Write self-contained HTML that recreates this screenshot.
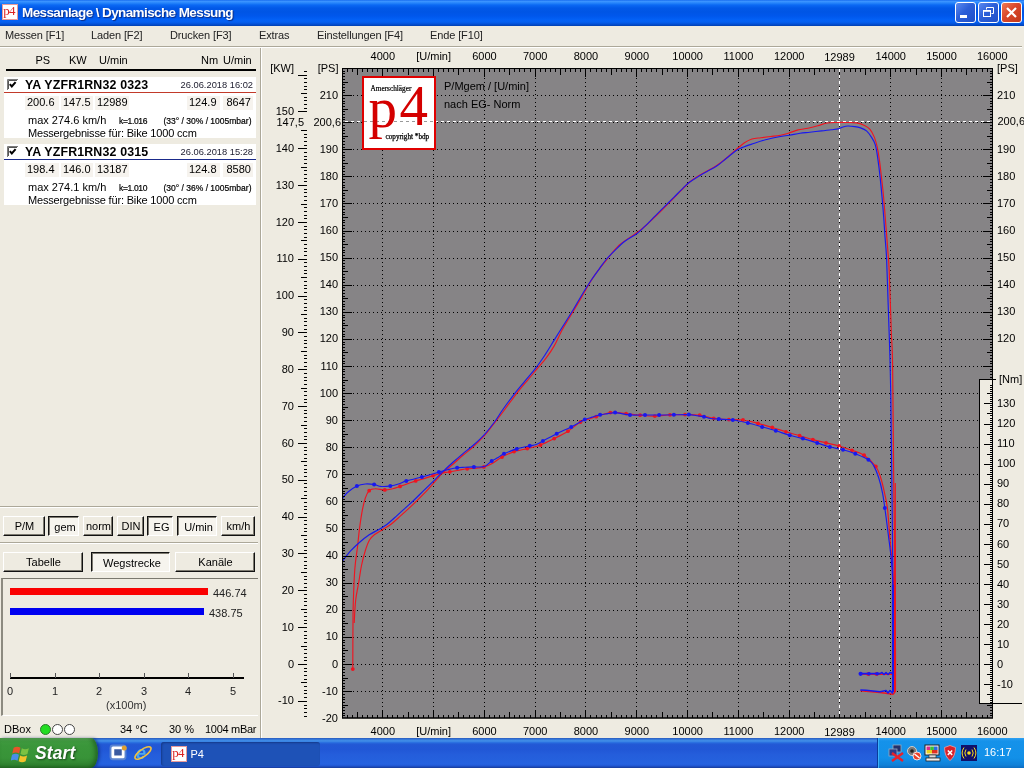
<!DOCTYPE html>
<html lang="de">
<head>
<meta charset="utf-8">
<title>Messanlage \ Dynamische Messung</title>
<style>
html,body{margin:0;padding:0;}
body{width:1024px;height:768px;overflow:hidden;position:relative;background:#EEEBE1;font-family:"Liberation Sans",Arial,sans-serif;font-size:11px;color:#000;}
.abs{position:absolute;}
.t{position:absolute;white-space:nowrap;line-height:13px;}
/* title bar */
#titlebar{position:absolute;left:0;top:0;width:1024px;height:26px;background:linear-gradient(to bottom,#1a6ef0 0px,#3a93ff 1.5px,#2685fb 3px,#0b69f4 5px,#0259e8 8px,#0055e5 12px,#0057ec 16px,#0361f6 20px,#0560f0 22px,#0351d8 24px,#0040b0 26px);}
#title{position:absolute;left:22px;top:4px;font-weight:bold;font-size:13.5px;line-height:17px;color:#fff;text-shadow:1px 1px 1px #0a2a80;white-space:nowrap;letter-spacing:-0.6px;}
.tb{position:absolute;top:2px;width:19px;height:19px;border:1px solid #fff;border-radius:3px;background:linear-gradient(135deg,#5b8af0 0%,#2c5fd8 45%,#2050c8 100%);}
#tbclose{background:linear-gradient(135deg,#ee7a55 0%,#d9472a 45%,#c2381b 100%);}
/* menu */
#menubar{position:absolute;left:0;top:26px;width:1024px;height:20px;}
#menubar span{position:absolute;top:3px;line-height:13px;white-space:nowrap;color:#222;letter-spacing:-0.12px;}
.hline{position:absolute;height:1px;background:#aca899;}
.hline2{position:absolute;height:1px;background:#fff;}
/* run blocks */
.run{position:absolute;left:4px;width:252px;height:61px;background:#fff;}
.cell{position:absolute;top:19px;height:14px;background:#f6f3ee;}
.btn{position:absolute;height:20px;box-sizing:border-box;line-height:17px;text-align:center;white-space:nowrap;}
.up{border:1px solid;border-color:#fff #111 #111 #fff;box-shadow:inset -1px -1px 0 #7d7a70;padding:1px 0 0 1px;}
.down{border:1px solid;border-color:#111 #fff #fff #111;box-shadow:inset 1px 1px 0 #7d7a70;background:#f6f4ee;padding:2px 0 0 3px;}
.circ{position:absolute;width:9px;height:9px;border:1px solid #444;border-radius:50%;background:#fff;top:724px;}
/* taskbar */
#taskbar{position:absolute;left:0;top:738px;width:1024px;height:30px;background:linear-gradient(to bottom,#2a62c8 0,#3165c4 3%,#3682e5 6%,#4490e6 10%,#3883e5 12%,#2b71e0 15%,#2663da 18%,#235bd6 20%,#2258d5 23%,#2157d6 38%,#245ddb 54%,#2562df 86%,#245fdc 89%,#2158d4 92%,#1d4ec0 95%,#1941a5 98%);}
#start{position:absolute;left:0;top:0;width:98px;height:30px;border-radius:0 7px 7px 0/0 15px 15px 0;background:linear-gradient(to bottom,#5fae5f 0px,#3f9a3f 3px,#3a963a 8px,#389338 20px,#2f822f 27px,#256f25 30px);box-shadow:inset -3px 0 4px rgba(20,70,20,0.55),2px 0 3px rgba(10,30,100,0.5);}
#starttxt{position:absolute;left:35px;top:5px;font-size:17.5px;font-weight:bold;font-style:italic;color:#fff;line-height:20px;text-shadow:1px 1px 2px #1a4a1a;letter-spacing:0.1px;}
#task{position:absolute;left:160.500px;top:3.500px;width:159px;height:24px;border-radius:3px;background:#1e52b7;box-shadow:inset 1px 1px 2px #153a8a;}
#tray{position:absolute;left:877px;top:0;width:147px;height:30px;background:linear-gradient(to bottom,#2fa0f2 0px,#1592ea 3px,#1290e8 20px,#0f80d8 27px,#0d6cc0 30px);border-left:1px solid #0a3c9a;box-shadow:inset 1px 0 0 #3db0f8;}
svg.chart{position:absolute;left:0;top:0;}
#root{position:absolute;left:0;top:0;width:1024px;height:768px;overflow:hidden;will-change:transform;}
</style>
</head>
<body>
<div id="root">
<!-- title bar -->
<div id="titlebar">
  <svg class="abs" style="left:2px;top:4px" width="16" height="16" viewBox="0 0 16 16"><rect x="0.5" y="0.5" width="15" height="15" fill="#fff" stroke="#e89a9a"/><text x="1.2" y="11" font-family="Liberation Serif,serif" font-size="13px" fill="#d22" letter-spacing="-0.8">p4</text></svg>
  <div id="title">Messanlage \ Dynamische Messung</div>
  <div class="tb" style="left:955px"><svg width="19" height="19"><rect x="4" y="12" width="7" height="3" fill="#fff"/></svg></div>
  <div class="tb" style="left:978px"><svg width="19" height="19" fill="none" stroke="#fff"><path d="M7.5 6.5v-2h7v6h-2" stroke-width="1"/><rect x="4.5" y="7.5" width="7" height="6" stroke-width="1"/><line x1="4" y1="8" x2="12" y2="8" stroke-width="1.6"/></svg></div>
  <div class="tb" id="tbclose" style="left:1001px"><svg width="19" height="19" stroke="#fff" stroke-width="2.2" stroke-linecap="butt"><path d="M5 5l9 9M14 5l-9 9"/></svg></div>
</div>
<!-- menu bar -->
<div id="menubar">
  <span style="left:5px">Messen [F1]</span>
  <span style="left:91px">Laden [F2]</span>
  <span style="left:170px">Drucken [F3]</span>
  <span style="left:259px">Extras</span>
  <span style="left:317px">Einstellungen [F4]</span>
  <span style="left:430px">Ende [F10]</span>
</div>
<div class="hline" style="left:0;top:46px;width:1022px"></div>
<div class="hline2" style="left:0;top:47px;width:1022px"></div>
<div class="abs" style="left:260px;top:48px;width:1px;height:690px;background:#aca899"></div>
<div class="abs" style="left:261px;top:48px;width:1px;height:690px;background:#fff"></div>

<!-- left panel header -->
<div class="t" style="left:35.500px;top:54px">PS</div>
<div class="t" style="left:69px;top:54px">KW</div>
<div class="t" style="left:99px;top:54px">U/min</div>
<div class="t" style="left:201px;top:54px">Nm</div>
<div class="t" style="left:223px;top:54px">U/min</div>
<div class="abs" style="left:6px;top:69px;width:250px;height:2px;background:#000"></div>

<!-- run 1 -->
<div class="run" style="top:77px">
  <svg class="abs" style="left:2.500px;top:1.500px" width="11" height="11"><rect x="0" y="0" width="11" height="11" fill="#fff"/><path d="M0.5 11V0.5H11" fill="none" stroke="#7a7a7a" stroke-width="1"/><path d="M1.5 10V1.5H10" fill="none" stroke="#555" stroke-width="1"/><path d="M2.800 5.200l2 2.300l3.800-4.300" fill="none" stroke="#000" stroke-width="2"/></svg>
  <div class="t" style="left:21px;top:1px;font-weight:bold;font-size:12.4px;line-height:14px;letter-spacing:0.15px">YA YZFR1RN32 0323</div>
  <div class="t" style="right:3px;top:2px;font-size:9.3px;line-height:12px;color:#223">26.06.2018 16:02</div>
  <div class="abs" style="left:0;top:15px;width:252px;height:1px;background:#c23a2a"></div>
  <div class="cell" style="left:21px;width:34px"></div><div class="cell" style="left:57px;width:32px"></div><div class="cell" style="left:91px;width:34px"></div><div class="cell" style="left:183px;width:33px"></div><div class="cell" style="left:219px;width:30px"></div>
  <div class="t" style="left:23px;top:19px">200.6</div>
  <div class="t" style="left:59px;top:19px">147.5</div>
  <div class="t" style="left:93px;top:19px">12989</div>
  <div class="t" style="left:185px;top:19px">124.9</div>
  <div class="t" style="left:222.500px;top:19px">8647</div>
  <div class="t" style="left:24px;top:37px">max 274.6 km/h</div>
  <div class="t" style="left:115px;top:38px;font-size:8.5px;letter-spacing:-0.35px;-webkit-text-stroke:0.2px #000">k=1.016</div>
  <div class="t" style="left:159.500px;top:38px;font-size:8.5px;-webkit-text-stroke:0.2px #000">(33° / 30% / 1005mbar)</div>
  <div class="t" style="left:24px;top:50px;letter-spacing:-0.17px">Messergebnisse für: Bike 1000 ccm</div>
</div>
<!-- run 2 -->
<div class="run" style="top:144px">
  <svg class="abs" style="left:2.500px;top:1.500px" width="11" height="11"><rect x="0" y="0" width="11" height="11" fill="#fff"/><path d="M0.5 11V0.5H11" fill="none" stroke="#7a7a7a" stroke-width="1"/><path d="M1.5 10V1.5H10" fill="none" stroke="#555" stroke-width="1"/><path d="M2.800 5.200l2 2.300l3.800-4.300" fill="none" stroke="#000" stroke-width="2"/></svg>
  <div class="t" style="left:21px;top:1px;font-weight:bold;font-size:12.4px;line-height:14px;letter-spacing:0.15px">YA YZFR1RN32 0315</div>
  <div class="t" style="right:3px;top:2px;font-size:9.3px;line-height:12px;color:#223">26.06.2018 15:28</div>
  <div class="abs" style="left:0;top:15px;width:252px;height:1px;background:#1a2a8a"></div>
  <div class="cell" style="left:21px;width:34px"></div><div class="cell" style="left:57px;width:32px"></div><div class="cell" style="left:91px;width:34px"></div><div class="cell" style="left:183px;width:33px"></div><div class="cell" style="left:219px;width:30px"></div>
  <div class="t" style="left:23px;top:19px">198.4</div>
  <div class="t" style="left:59px;top:19px">146.0</div>
  <div class="t" style="left:93px;top:19px">13187</div>
  <div class="t" style="left:185px;top:19px">124.8</div>
  <div class="t" style="left:222.500px;top:19px">8580</div>
  <div class="t" style="left:24px;top:37px">max 274.1 km/h</div>
  <div class="t" style="left:115px;top:38px;font-size:8.5px;letter-spacing:-0.35px;-webkit-text-stroke:0.2px #000">k=1.010</div>
  <div class="t" style="left:159.500px;top:38px;font-size:8.5px;-webkit-text-stroke:0.2px #000">(30° / 36% / 1005mbar)</div>
  <div class="t" style="left:24px;top:50px;letter-spacing:-0.17px">Messergebnisse für: Bike 1000 ccm</div>
</div>

<!-- buttons -->
<div class="hline" style="left:0;top:506px;width:258px"></div><div class="hline2" style="left:0;top:507px;width:258px"></div>
<div class="btn up" style="left:3px;top:516px;width:42px">P/M</div>
<div class="btn down" style="left:48px;top:516px;width:31px">gem</div>
<div class="btn up" style="left:83px;top:516px;width:30px">norm</div>
<div class="btn up" style="left:117px;top:516px;width:27px">DIN</div>
<div class="btn down" style="left:147px;top:516px;width:26px">EG</div>
<div class="btn down" style="left:177px;top:516px;width:40px">U/min</div>
<div class="btn up" style="left:221px;top:516px;width:34px">km/h</div>
<div class="hline" style="left:0;top:542px;width:258px"></div><div class="hline2" style="left:0;top:543px;width:258px"></div>
<div class="btn up" style="left:3px;top:552px;width:80px">Tabelle</div>
<div class="btn down" style="left:91px;top:552px;width:79px">Wegstrecke</div>
<div class="btn up" style="left:175px;top:552px;width:80px">Kanäle</div>

<!-- Wegstrecke panel -->
<div class="abs" style="left:1px;top:578px;width:257px;height:138px;border-top:1px solid #7a786e;border-left:2px solid #8c8a80;border-bottom:1px solid #fff;box-sizing:border-box"></div>
<div class="abs" style="left:10px;top:588px;width:198px;height:7px;background:#fa0000"></div>
<div class="abs" style="left:10px;top:608px;width:194px;height:7px;background:#0000f0"></div>
<div class="t" style="left:213px;top:587px;color:#222">446.74</div>
<div class="t" style="left:209px;top:607px;color:#222">438.75</div>
<svg class="abs" style="left:0;top:670px" width="260" height="12" shape-rendering="crispEdges"><rect x="10" y="7" width="234" height="2" fill="#000"/><g fill="#555"><rect x="10" y="3" width="1" height="5"/><rect x="55" y="3" width="1" height="5"/><rect x="99" y="3" width="1" height="5"/><rect x="144" y="3" width="1" height="5"/><rect x="188" y="3" width="1" height="5"/><rect x="233" y="3" width="1" height="5"/></g></svg>
<div class="t" style="left:7px;top:685px;color:#222">0</div>
<div class="t" style="left:52px;top:685px;color:#222">1</div>
<div class="t" style="left:96px;top:685px;color:#222">2</div>
<div class="t" style="left:141px;top:685px;color:#222">3</div>
<div class="t" style="left:185px;top:685px;color:#222">4</div>
<div class="t" style="left:230px;top:685px;color:#222">5</div>
<div class="t" style="left:106px;top:699px;color:#333">(x100m)</div>

<!-- status row -->
<div class="t" style="left:4px;top:723px">DBox</div>
<div class="circ" style="left:40px;background:#22dd22;border-color:#2a7a2a"></div>
<div class="circ" style="left:52px"></div>
<div class="circ" style="left:64px"></div>
<div class="t" style="left:120px;top:723px">34 °C</div>
<div class="t" style="left:169px;top:723px">30 %</div>
<div class="t" style="left:205px;top:723px;letter-spacing:-0.3px">1004 mBar</div>

<svg class="chart" width="1024" height="768" viewBox="0 0 1024 768">
<rect x="342" y="68" width="651" height="650" fill="#868486"/>
<g stroke="#000" stroke-width="1" stroke-dasharray="1 3" shape-rendering="crispEdges" fill="none">
<line x1="382.5" y1="70" x2="382.5" y2="717"/>
<line x1="433.5" y1="70" x2="433.5" y2="717"/>
<line x1="484.5" y1="70" x2="484.5" y2="717"/>
<line x1="535.5" y1="70" x2="535.5" y2="717"/>
<line x1="585.5" y1="70" x2="585.5" y2="717"/>
<line x1="636.5" y1="70" x2="636.5" y2="717"/>
<line x1="687.5" y1="70" x2="687.5" y2="717"/>
<line x1="738.5" y1="70" x2="738.5" y2="717"/>
<line x1="789.5" y1="70" x2="789.5" y2="717"/>
<line x1="839.5" y1="70" x2="839.5" y2="717"/>
<line x1="890.5" y1="70" x2="890.5" y2="717"/>
<line x1="941.5" y1="70" x2="941.5" y2="717"/>
<line x1="345" y1="691.5" x2="991" y2="691.5"/>
<line x1="345" y1="664.5" x2="991" y2="664.5"/>
<line x1="345" y1="637.5" x2="991" y2="637.5"/>
<line x1="345" y1="610.5" x2="991" y2="610.5"/>
<line x1="345" y1="583.5" x2="991" y2="583.5"/>
<line x1="345" y1="556.5" x2="991" y2="556.5"/>
<line x1="345" y1="529.5" x2="991" y2="529.5"/>
<line x1="345" y1="501.5" x2="991" y2="501.5"/>
<line x1="345" y1="474.5" x2="991" y2="474.5"/>
<line x1="345" y1="447.5" x2="991" y2="447.5"/>
<line x1="345" y1="420.5" x2="991" y2="420.5"/>
<line x1="345" y1="393.5" x2="991" y2="393.5"/>
<line x1="345" y1="366.5" x2="991" y2="366.5"/>
<line x1="345" y1="339.5" x2="991" y2="339.5"/>
<line x1="345" y1="312.5" x2="991" y2="312.5"/>
<line x1="345" y1="285.5" x2="991" y2="285.5"/>
<line x1="345" y1="258.5" x2="991" y2="258.5"/>
<line x1="345" y1="231.5" x2="991" y2="231.5"/>
<line x1="345" y1="203.5" x2="991" y2="203.5"/>
<line x1="345" y1="176.5" x2="991" y2="176.5"/>
<line x1="345" y1="149.5" x2="991" y2="149.5"/>
<line x1="345" y1="122.5" x2="991" y2="122.5"/>
<line x1="345" y1="95.5" x2="991" y2="95.5"/>
</g>
<g fill="none" stroke-width="1.15" stroke-linejoin="round">
<path d="M354.2 623.0C354.4 619.2 354.9 606.8 355.7 600.0C356.5 593.2 357.8 587.8 358.8 582.0C359.8 576.2 360.4 570.7 361.5 565.5C362.6 560.3 363.9 555.2 365.2 551.0C366.5 546.8 367.9 542.8 369.5 540.0C371.1 537.2 372.8 536.1 375.0 534.3C377.2 532.5 380.3 531.0 382.9 529.4C385.5 527.8 388.1 526.5 390.7 524.5C393.3 522.5 395.6 520.3 398.5 517.7C401.4 515.1 405.1 511.9 408.3 508.9C411.6 505.9 414.8 502.9 418.0 499.7C421.2 496.5 424.5 493.2 427.8 489.7C431.1 486.2 435.2 481.4 437.6 478.6C440.0 475.8 439.8 475.5 442.4 473.1C445.0 470.7 449.8 467.0 453.2 464.0C456.6 461.0 459.8 458.0 463.0 455.2C466.2 452.4 469.1 450.6 472.7 447.3C476.3 444.0 481.1 439.2 484.4 435.6C487.7 432.0 488.9 430.2 492.2 425.9C495.6 421.6 500.3 415.5 504.4 410.0C508.5 404.5 513.4 397.6 517.1 392.8C520.9 388.0 523.6 385.0 526.9 381.1C530.1 377.2 533.4 373.3 536.6 369.4C539.9 365.5 543.5 361.6 546.4 357.7C549.3 353.8 551.6 350.5 554.2 345.9C556.8 341.3 559.1 335.7 562.0 330.3C564.9 324.9 568.5 319.2 571.8 313.7C575.1 308.2 578.7 302.2 581.6 297.1C584.5 292.1 586.8 287.6 589.4 283.4C592.0 279.2 594.4 275.5 597.2 271.7C600.0 267.9 602.6 264.7 606.2 260.3C609.9 255.9 614.2 249.7 619.1 245.2C624.0 240.7 631.5 236.6 635.7 233.5C639.9 230.4 640.1 230.6 644.5 226.7C648.9 222.8 657.1 214.9 662.0 210.1C666.9 205.3 669.2 202.6 673.8 198.0C678.3 193.4 685.2 186.1 689.4 182.3C693.6 178.6 694.5 178.3 699.1 175.5C703.7 172.7 712.1 168.4 716.7 165.5C721.3 162.6 723.2 160.7 726.5 158.0C729.8 155.3 733.3 152.0 736.2 149.5C739.2 147.0 741.5 144.8 744.1 143.0C746.7 141.2 749.1 139.9 751.9 139.0C754.7 138.1 757.9 138.1 761.0 137.7C764.1 137.3 767.5 136.9 770.8 136.5C774.0 136.1 777.6 135.8 780.5 135.2C783.4 134.6 785.5 134.1 788.4 133.2C791.3 132.3 794.9 130.7 798.1 129.9C801.4 129.1 804.6 129.0 807.9 128.3C811.2 127.6 814.5 126.7 817.7 125.8C821.0 124.9 824.1 123.5 827.4 123.0C830.6 122.5 833.9 122.6 837.2 122.5C840.5 122.4 843.7 122.4 847.0 122.5C850.2 122.6 853.8 122.4 856.7 122.9C859.6 123.4 862.3 124.3 864.5 125.4C866.7 126.5 868.4 127.4 870.0 129.3C871.6 131.2 873.1 134.2 874.3 137.1C875.5 140.0 876.4 143.3 877.2 146.9C878.0 150.5 878.6 154.1 879.2 158.6C879.9 163.1 880.5 168.7 881.1 174.2C881.8 179.7 882.5 185.9 883.1 191.8C883.7 197.7 884.1 203.5 884.6 209.4C885.1 215.3 885.5 220.2 886.0 227.0C886.5 233.8 887.3 242.7 887.8 250.0C888.3 257.3 888.6 257.0 889.2 271.0C889.8 285.0 890.8 318.1 891.4 333.8C892.0 349.4 892.2 340.6 892.6 365.0C893.0 389.4 893.4 447.5 893.7 480.0C894.1 512.5 894.5 524.7 894.7 560.0C894.9 595.3 895.0 670.0 895.0 692.0" stroke="#f01420"/>
<path d="M352.8 669.1C352.8 661.2 352.9 633.2 353.0 622.0C353.1 610.8 353.0 610.8 353.3 602.0C353.6 593.2 354.1 578.4 354.8 569.2C355.5 560.0 356.7 553.6 357.5 547.0C358.3 540.4 358.6 535.6 359.4 529.4C360.2 523.2 361.4 515.0 362.4 509.8C363.4 504.6 364.2 501.3 365.3 498.1C366.4 494.9 367.6 492.3 369.2 490.7C370.8 489.1 372.4 488.9 375.0 488.8C377.6 488.6 381.9 489.9 384.8 489.9C387.7 489.9 390.1 489.3 392.6 488.8C395.1 488.2 397.4 487.3 400.0 486.4C402.6 485.5 405.7 484.4 408.3 483.5C410.9 482.6 413.1 481.7 415.7 480.9C418.3 480.1 421.0 479.5 423.9 478.6C426.8 477.7 430.1 476.6 433.0 475.7C435.9 474.8 438.7 473.8 441.5 473.1C444.3 472.5 447.0 472.3 449.9 471.8C452.8 471.3 456.1 470.7 459.0 470.2C461.9 469.7 464.3 469.1 467.2 468.8C470.2 468.5 473.8 468.5 476.6 468.2C479.4 467.9 481.3 467.7 483.9 466.9C486.5 466.1 489.2 465.0 492.2 463.4C495.3 461.8 498.4 459.1 502.0 457.1C505.6 455.1 510.9 452.8 514.1 451.6C517.3 450.4 518.8 450.5 521.0 450.0C523.2 449.5 524.0 449.4 527.3 448.6C530.5 447.8 536.0 446.7 540.5 445.0C545.0 443.3 549.6 440.9 554.2 438.6C558.8 436.3 563.5 434.0 567.9 431.2C572.3 428.4 577.1 424.0 580.5 422.0C583.9 420.0 585.8 420.0 588.4 419.1C591.0 418.2 593.6 417.5 596.2 416.7C598.8 415.9 601.6 414.9 604.0 414.2C606.4 413.5 608.1 412.9 610.4 412.6C612.7 412.3 615.1 412.4 617.7 412.6C620.3 412.8 622.4 413.2 626.1 413.6C629.8 414.0 635.3 414.8 640.1 415.2C644.9 415.6 649.8 416.2 654.8 416.1C659.8 416.0 665.0 415.1 670.0 414.8C675.0 414.6 680.0 414.5 685.0 414.6C690.0 414.7 694.9 414.6 699.7 415.2C704.5 415.8 708.8 417.6 713.7 418.3C718.6 419.0 724.0 419.3 728.9 419.6C733.8 419.9 738.1 419.4 743.0 420.0C747.9 420.6 753.1 422.1 758.0 423.4C762.9 424.6 767.6 426.1 772.3 427.5C776.9 428.9 781.3 430.4 785.9 431.8C790.5 433.2 795.1 434.4 799.6 435.7C804.1 437.0 808.5 438.4 812.9 439.6C817.3 440.8 821.6 441.8 826.0 442.9C830.4 444.0 834.8 444.8 839.1 446.0C843.4 447.2 847.8 448.8 852.0 450.3C856.2 451.8 860.1 452.5 864.1 455.2C868.1 457.9 873.0 462.8 875.8 466.5C878.6 470.2 879.2 473.2 880.7 477.7C882.2 482.2 883.5 488.1 884.6 493.3C885.7 498.5 886.6 501.1 887.5 508.9C888.4 516.7 889.3 530.7 890.1 540.2C890.9 549.7 891.9 557.5 892.5 565.7C893.1 573.9 893.3 580.4 893.7 589.4C894.1 598.4 894.4 602.9 894.6 620.0C894.9 637.1 894.9 680.0 895.0 692.0" stroke="#f01420"/>
<path d="M895.3 483L895.3 560" stroke="#f01420"/>
<path d="M894.9 540L895.1 692" stroke="#f01420" stroke-width="2"/>
<path d="M860.5 674.3L893 674.3M860.5 690.8L880 692.5L893 694.3L895 692" stroke="#f01420" stroke-width="1.6"/>
</g>
<g fill="#f01420"><circle cx="352.8" cy="669.1" r="1.9"/><circle cx="369.2" cy="490.7" r="1.9"/><circle cx="384.8" cy="489.9" r="1.9"/><circle cx="400.0" cy="486.4" r="1.9"/><circle cx="415.7" cy="480.9" r="1.9"/><circle cx="433.0" cy="475.7" r="1.9"/><circle cx="449.9" cy="471.8" r="1.9"/><circle cx="467.2" cy="468.8" r="1.9"/><circle cx="483.9" cy="466.9" r="1.9"/><circle cx="502.0" cy="457.1" r="1.9"/><circle cx="514.1" cy="451.6" r="1.9"/><circle cx="527.3" cy="448.6" r="1.9"/><circle cx="540.5" cy="445.0" r="1.9"/><circle cx="554.2" cy="438.6" r="1.9"/><circle cx="567.9" cy="431.2" r="1.9"/><circle cx="580.5" cy="422.0" r="1.9"/><circle cx="596.2" cy="416.7" r="1.9"/><circle cx="610.4" cy="412.6" r="1.9"/><circle cx="626.1" cy="413.6" r="1.9"/><circle cx="640.1" cy="415.2" r="1.9"/><circle cx="654.8" cy="416.1" r="1.9"/><circle cx="670.0" cy="414.8" r="1.9"/><circle cx="685.0" cy="414.6" r="1.9"/><circle cx="699.7" cy="415.2" r="1.9"/><circle cx="713.7" cy="418.3" r="1.9"/><circle cx="728.9" cy="419.6" r="1.9"/><circle cx="743.0" cy="420.0" r="1.9"/><circle cx="758.0" cy="423.4" r="1.9"/><circle cx="772.3" cy="427.5" r="1.9"/><circle cx="785.9" cy="431.8" r="1.9"/><circle cx="799.6" cy="435.7" r="1.9"/><circle cx="812.9" cy="439.6" r="1.9"/><circle cx="826.0" cy="442.9" r="1.9"/><circle cx="839.1" cy="446.0" r="1.9"/><circle cx="852.0" cy="450.3" r="1.9"/><circle cx="864.1" cy="455.2" r="1.9"/><circle cx="875.8" cy="466.5" r="1.9"/><circle cx="868.3" cy="674" r="2.1"/><circle cx="876.5" cy="674" r="2.1"/></g>
<g fill="none" stroke-width="1.15" stroke-linejoin="round">
<path d="M342.8 560.6C344.1 559.0 347.8 553.9 350.6 550.9C353.4 547.9 356.3 545.2 359.4 542.5C362.5 539.8 365.9 537.0 369.2 534.8C372.5 532.6 376.1 531.1 379.0 529.4C381.9 527.7 384.2 526.5 386.8 524.5C389.4 522.5 391.7 520.3 394.6 517.7C397.5 515.1 401.1 511.8 404.4 508.9C407.6 505.9 410.9 503.1 414.1 500.0C417.4 496.9 420.6 493.5 423.9 490.3C427.2 487.1 430.4 484.1 433.7 480.9C436.9 477.7 440.1 474.3 443.4 471.2C446.6 468.1 449.9 464.9 453.2 462.0C456.5 459.1 459.8 456.3 463.0 453.6C466.2 450.9 469.1 449.0 472.7 445.8C476.3 442.6 480.6 438.7 484.4 434.6C488.1 430.5 492.2 425.1 495.2 421.0C498.2 416.9 499.2 414.7 502.5 410.0C505.8 405.3 511.5 397.6 515.2 392.8C518.9 388.0 521.6 385.0 524.9 381.1C528.1 377.2 531.4 373.6 534.7 369.4C538.0 365.2 541.2 360.6 544.5 355.7C547.8 350.8 551.0 345.3 554.2 340.1C557.5 334.9 560.7 329.7 564.0 324.5C567.3 319.3 570.5 314.2 573.8 308.8C577.0 303.4 580.5 297.0 583.5 292.2C586.5 287.4 588.9 283.7 591.5 279.8C594.1 275.9 596.8 272.2 599.3 268.8C601.8 265.4 603.6 262.6 606.2 259.5C608.9 256.4 612.1 253.1 615.2 250.1C618.3 247.1 621.5 243.9 624.9 241.3C628.3 238.7 632.4 236.9 635.7 234.5C639.0 232.1 641.4 229.6 644.5 226.7C647.6 223.8 651.0 220.2 654.2 216.9C657.5 213.6 660.7 210.3 664.0 207.1C667.3 203.8 670.5 200.7 673.8 197.4C677.0 194.2 680.9 190.1 683.5 187.6C686.1 185.1 686.8 184.2 689.4 182.3C692.0 180.4 696.2 177.7 699.1 175.9C702.0 174.1 704.0 173.0 707.0 171.4C709.9 169.8 713.4 168.3 716.7 166.1C720.0 163.9 723.2 160.9 726.5 158.3C729.8 155.7 733.6 152.3 736.2 150.5C738.9 148.7 739.5 148.7 742.1 147.6C744.7 146.5 748.0 145.4 751.9 144.1C755.8 142.8 761.0 141.0 765.5 139.8C770.0 138.6 775.2 137.6 779.2 136.8C783.2 136.0 785.8 135.8 789.3 135.2C792.8 134.6 796.7 133.7 800.1 133.2C803.5 132.7 806.2 132.6 809.8 132.2C813.4 131.8 818.0 131.3 821.6 130.9C825.2 130.5 828.5 130.0 831.3 129.7C834.1 129.4 836.2 129.3 838.2 128.9C840.2 128.5 841.4 127.5 843.0 127.0C844.6 126.5 845.9 126.1 847.9 126.0C849.9 125.9 852.7 126.3 854.8 126.6C856.9 126.9 858.6 127.2 860.6 127.9C862.6 128.6 864.7 129.4 866.5 130.9C868.3 132.4 869.9 134.8 871.4 137.1C872.9 139.4 874.2 141.3 875.3 144.9C876.4 148.5 877.0 153.1 877.8 158.6C878.6 164.1 879.5 171.6 880.2 178.1C880.9 184.6 881.5 191.2 882.1 197.7C882.7 204.2 883.2 210.7 883.7 217.2C884.2 223.7 884.5 229.8 885.0 236.7C885.5 243.6 886.1 247.8 886.6 258.8C887.1 269.7 887.6 287.4 888.1 302.5C888.6 317.6 889.2 333.8 889.7 349.4C890.2 365.0 890.4 374.2 890.8 396.0C891.1 417.8 891.5 452.7 891.8 480.0C892.1 507.3 892.5 524.7 892.7 560.0C892.9 595.3 893.0 670.0 893.1 692.0" stroke="#1818f0"/>
<path d="M342.8 498.1C343.6 497.1 345.4 494.3 347.7 492.3C350.0 490.3 354.0 487.4 356.9 486.0C359.8 484.6 362.4 484.2 365.3 484.0C368.2 483.8 371.5 484.1 374.1 484.5C376.7 484.9 378.2 486.1 380.9 486.4C383.6 486.6 387.4 486.4 390.3 486.0C393.2 485.6 395.8 484.9 398.5 484.0C401.2 483.1 403.7 481.7 406.3 480.9C408.9 480.1 411.5 479.6 414.1 479.0C416.7 478.4 419.0 477.8 421.9 477.0C424.8 476.2 428.9 475.1 431.7 474.3C434.5 473.5 436.3 472.8 438.9 472.0C441.5 471.2 444.3 470.5 447.3 469.8C450.3 469.1 454.2 468.1 457.1 467.7C460.0 467.3 462.1 467.4 464.9 467.3C467.7 467.2 470.6 467.0 473.9 466.9C477.1 466.8 481.4 467.5 484.4 466.5C487.4 465.5 489.4 462.5 491.7 461.0C494.0 459.5 496.1 458.7 498.1 457.5C500.2 456.3 500.9 455.2 504.0 453.8C507.1 452.4 512.4 450.2 516.7 448.9C521.0 447.6 526.6 446.5 529.8 445.8C532.9 445.1 533.4 445.6 535.6 444.8C537.8 444.0 539.4 442.8 542.9 440.9C546.4 439.0 552.0 436.0 556.7 433.7C561.4 431.4 566.5 429.2 571.2 426.9C575.9 424.5 581.3 421.2 584.8 419.6C588.3 418.0 589.8 417.9 592.3 417.1C594.8 416.3 597.5 415.4 600.1 414.8C602.7 414.2 605.4 414.0 607.9 413.6C610.4 413.2 612.8 412.6 615.1 412.6C617.4 412.6 619.1 413.2 621.6 413.6C624.1 414.0 626.1 414.8 630.0 415.0C633.9 415.2 640.1 415.0 645.0 415.0C649.9 415.0 654.3 415.0 659.1 415.0C663.9 415.0 668.9 414.9 673.9 414.8C678.9 414.7 685.1 414.5 688.9 414.6C692.7 414.8 694.3 415.4 696.8 415.7C699.3 416.0 701.7 416.2 704.0 416.7C706.3 417.2 707.9 418.1 710.4 418.5C712.9 418.9 715.1 418.9 718.8 419.1C722.5 419.4 727.9 419.4 732.8 420.0C737.6 420.6 743.0 421.9 747.9 423.0C752.8 424.1 757.5 425.6 762.1 426.9C766.8 428.2 771.2 429.4 775.8 430.8C780.4 432.2 785.3 434.0 789.8 435.3C794.3 436.6 798.3 437.3 802.9 438.6C807.5 439.9 812.7 441.5 817.2 442.9C821.7 444.3 825.6 445.9 829.9 447.0C834.2 448.1 838.8 448.6 843.0 449.7C847.2 450.8 851.1 452.1 855.3 453.8C859.5 455.5 865.3 457.7 868.4 459.7C871.5 461.7 872.1 462.9 873.8 465.9C875.5 468.9 877.2 473.1 878.7 477.7C880.2 482.3 881.6 488.3 882.6 493.3C883.6 498.3 883.8 501.0 884.8 507.9C885.8 514.8 887.3 526.6 888.3 534.7C889.3 542.8 890.2 548.7 891.0 556.6C891.8 564.5 892.4 571.4 892.8 582.0C893.2 592.6 893.2 601.7 893.2 620.0C893.2 638.3 893.1 680.0 893.1 692.0" stroke="#1818f0"/>
<path d="M892.8 585L893 692" stroke="#1818f0" stroke-width="1.8"/>
<path d="M860.5 673.6L880 673.6L882 672.5L884 674.5L886 672.5L888 674.5L890 672.5L893 673.6M860.3 690L866 690.3L880 691.7L886 690.5L888 693L890 690.5L893 693.5" stroke="#1818f0" stroke-width="1.6"/>
</g>
<g fill="#1818f0"><circle cx="356.9" cy="486.0" r="2"/><circle cx="374.1" cy="484.5" r="2"/><circle cx="390.3" cy="486.0" r="2"/><circle cx="406.3" cy="480.9" r="2"/><circle cx="421.9" cy="477.0" r="2"/><circle cx="438.9" cy="472.0" r="2"/><circle cx="457.1" cy="467.7" r="2"/><circle cx="473.9" cy="466.9" r="2"/><circle cx="491.7" cy="461.0" r="2"/><circle cx="504.0" cy="453.8" r="2"/><circle cx="516.7" cy="448.9" r="2"/><circle cx="529.8" cy="445.8" r="2"/><circle cx="542.9" cy="440.9" r="2"/><circle cx="556.7" cy="433.7" r="2"/><circle cx="571.2" cy="426.9" r="2"/><circle cx="584.8" cy="419.6" r="2"/><circle cx="600.1" cy="414.8" r="2"/><circle cx="615.1" cy="412.6" r="2"/><circle cx="630.0" cy="415.0" r="2"/><circle cx="645.0" cy="415.0" r="2"/><circle cx="659.1" cy="415.0" r="2"/><circle cx="673.9" cy="414.8" r="2"/><circle cx="688.9" cy="414.6" r="2"/><circle cx="704.0" cy="416.7" r="2"/><circle cx="718.8" cy="419.1" r="2"/><circle cx="732.8" cy="420.0" r="2"/><circle cx="747.9" cy="423.0" r="2"/><circle cx="762.1" cy="426.9" r="2"/><circle cx="775.8" cy="430.8" r="2"/><circle cx="789.8" cy="435.3" r="2"/><circle cx="802.9" cy="438.6" r="2"/><circle cx="817.2" cy="442.9" r="2"/><circle cx="829.9" cy="447.0" r="2"/><circle cx="843.0" cy="449.7" r="2"/><circle cx="855.3" cy="453.8" r="2"/><circle cx="868.4" cy="459.7" r="2"/><circle cx="884.8" cy="507.9" r="2"/><circle cx="860.6" cy="673.8" r="2.1"/><circle cx="869" cy="673.8" r="1.8"/><circle cx="877.2" cy="673.8" r="1.8"/></g>
<g stroke="#000" stroke-width="1" shape-rendering="crispEdges" fill="none">
<path d="M342.5 718V68.5H992.5V718"/>
<line x1="342" y1="718" x2="993" y2="718" stroke-width="1.4" shape-rendering="auto"/>
<line x1="342.5" y1="68" x2="342.5" y2="72"/>
<line x1="342.5" y1="715" x2="342.5" y2="718"/>
<line x1="347.5" y1="68" x2="347.5" y2="72"/>
<line x1="347.5" y1="715" x2="347.5" y2="718"/>
<line x1="352.5" y1="68" x2="352.5" y2="72"/>
<line x1="352.5" y1="715" x2="352.5" y2="718"/>
<line x1="357.5" y1="68" x2="357.5" y2="75"/>
<line x1="357.5" y1="712" x2="357.5" y2="718"/>
<line x1="362.5" y1="68" x2="362.5" y2="72"/>
<line x1="362.5" y1="715" x2="362.5" y2="718"/>
<line x1="367.5" y1="68" x2="367.5" y2="72"/>
<line x1="367.5" y1="715" x2="367.5" y2="718"/>
<line x1="372.5" y1="68" x2="372.5" y2="72"/>
<line x1="372.5" y1="715" x2="372.5" y2="718"/>
<line x1="377.5" y1="68" x2="377.5" y2="72"/>
<line x1="377.5" y1="715" x2="377.5" y2="718"/>
<line x1="382.5" y1="68" x2="382.5" y2="77"/>
<line x1="382.5" y1="710" x2="382.5" y2="718"/>
<line x1="387.5" y1="68" x2="387.5" y2="72"/>
<line x1="387.5" y1="715" x2="387.5" y2="718"/>
<line x1="392.5" y1="68" x2="392.5" y2="72"/>
<line x1="392.5" y1="715" x2="392.5" y2="718"/>
<line x1="397.5" y1="68" x2="397.5" y2="72"/>
<line x1="397.5" y1="715" x2="397.5" y2="718"/>
<line x1="403.5" y1="68" x2="403.5" y2="72"/>
<line x1="403.5" y1="715" x2="403.5" y2="718"/>
<line x1="408.5" y1="68" x2="408.5" y2="75"/>
<line x1="408.5" y1="712" x2="408.5" y2="718"/>
<line x1="413.5" y1="68" x2="413.5" y2="72"/>
<line x1="413.5" y1="715" x2="413.5" y2="718"/>
<line x1="418.5" y1="68" x2="418.5" y2="72"/>
<line x1="418.5" y1="715" x2="418.5" y2="718"/>
<line x1="423.5" y1="68" x2="423.5" y2="72"/>
<line x1="423.5" y1="715" x2="423.5" y2="718"/>
<line x1="428.5" y1="68" x2="428.5" y2="72"/>
<line x1="428.5" y1="715" x2="428.5" y2="718"/>
<line x1="433.5" y1="68" x2="433.5" y2="77"/>
<line x1="433.5" y1="710" x2="433.5" y2="718"/>
<line x1="438.5" y1="68" x2="438.5" y2="72"/>
<line x1="438.5" y1="715" x2="438.5" y2="718"/>
<line x1="443.5" y1="68" x2="443.5" y2="72"/>
<line x1="443.5" y1="715" x2="443.5" y2="718"/>
<line x1="448.5" y1="68" x2="448.5" y2="72"/>
<line x1="448.5" y1="715" x2="448.5" y2="718"/>
<line x1="453.5" y1="68" x2="453.5" y2="72"/>
<line x1="453.5" y1="715" x2="453.5" y2="718"/>
<line x1="458.5" y1="68" x2="458.5" y2="75"/>
<line x1="458.5" y1="712" x2="458.5" y2="718"/>
<line x1="463.5" y1="68" x2="463.5" y2="72"/>
<line x1="463.5" y1="715" x2="463.5" y2="718"/>
<line x1="469.5" y1="68" x2="469.5" y2="72"/>
<line x1="469.5" y1="715" x2="469.5" y2="718"/>
<line x1="474.5" y1="68" x2="474.5" y2="72"/>
<line x1="474.5" y1="715" x2="474.5" y2="718"/>
<line x1="479.5" y1="68" x2="479.5" y2="72"/>
<line x1="479.5" y1="715" x2="479.5" y2="718"/>
<line x1="484.5" y1="68" x2="484.5" y2="77"/>
<line x1="484.5" y1="710" x2="484.5" y2="718"/>
<line x1="489.5" y1="68" x2="489.5" y2="72"/>
<line x1="489.5" y1="715" x2="489.5" y2="718"/>
<line x1="494.5" y1="68" x2="494.5" y2="72"/>
<line x1="494.5" y1="715" x2="494.5" y2="718"/>
<line x1="499.5" y1="68" x2="499.5" y2="72"/>
<line x1="499.5" y1="715" x2="499.5" y2="718"/>
<line x1="504.5" y1="68" x2="504.5" y2="72"/>
<line x1="504.5" y1="715" x2="504.5" y2="718"/>
<line x1="509.5" y1="68" x2="509.5" y2="75"/>
<line x1="509.5" y1="712" x2="509.5" y2="718"/>
<line x1="514.5" y1="68" x2="514.5" y2="72"/>
<line x1="514.5" y1="715" x2="514.5" y2="718"/>
<line x1="519.5" y1="68" x2="519.5" y2="72"/>
<line x1="519.5" y1="715" x2="519.5" y2="718"/>
<line x1="524.5" y1="68" x2="524.5" y2="72"/>
<line x1="524.5" y1="715" x2="524.5" y2="718"/>
<line x1="530.5" y1="68" x2="530.5" y2="72"/>
<line x1="530.5" y1="715" x2="530.5" y2="718"/>
<line x1="535.5" y1="68" x2="535.5" y2="77"/>
<line x1="535.5" y1="710" x2="535.5" y2="718"/>
<line x1="540.5" y1="68" x2="540.5" y2="72"/>
<line x1="540.5" y1="715" x2="540.5" y2="718"/>
<line x1="545.5" y1="68" x2="545.5" y2="72"/>
<line x1="545.5" y1="715" x2="545.5" y2="718"/>
<line x1="550.5" y1="68" x2="550.5" y2="72"/>
<line x1="550.5" y1="715" x2="550.5" y2="718"/>
<line x1="555.5" y1="68" x2="555.5" y2="72"/>
<line x1="555.5" y1="715" x2="555.5" y2="718"/>
<line x1="560.5" y1="68" x2="560.5" y2="75"/>
<line x1="560.5" y1="712" x2="560.5" y2="718"/>
<line x1="565.5" y1="68" x2="565.5" y2="72"/>
<line x1="565.5" y1="715" x2="565.5" y2="718"/>
<line x1="570.5" y1="68" x2="570.5" y2="72"/>
<line x1="570.5" y1="715" x2="570.5" y2="718"/>
<line x1="575.5" y1="68" x2="575.5" y2="72"/>
<line x1="575.5" y1="715" x2="575.5" y2="718"/>
<line x1="580.5" y1="68" x2="580.5" y2="72"/>
<line x1="580.5" y1="715" x2="580.5" y2="718"/>
<line x1="585.5" y1="68" x2="585.5" y2="77"/>
<line x1="585.5" y1="710" x2="585.5" y2="718"/>
<line x1="590.5" y1="68" x2="590.5" y2="72"/>
<line x1="590.5" y1="715" x2="590.5" y2="718"/>
<line x1="596.5" y1="68" x2="596.5" y2="72"/>
<line x1="596.5" y1="715" x2="596.5" y2="718"/>
<line x1="601.5" y1="68" x2="601.5" y2="72"/>
<line x1="601.5" y1="715" x2="601.5" y2="718"/>
<line x1="606.5" y1="68" x2="606.5" y2="72"/>
<line x1="606.5" y1="715" x2="606.5" y2="718"/>
<line x1="611.5" y1="68" x2="611.5" y2="75"/>
<line x1="611.5" y1="712" x2="611.5" y2="718"/>
<line x1="616.5" y1="68" x2="616.5" y2="72"/>
<line x1="616.5" y1="715" x2="616.5" y2="718"/>
<line x1="621.5" y1="68" x2="621.5" y2="72"/>
<line x1="621.5" y1="715" x2="621.5" y2="718"/>
<line x1="626.5" y1="68" x2="626.5" y2="72"/>
<line x1="626.5" y1="715" x2="626.5" y2="718"/>
<line x1="631.5" y1="68" x2="631.5" y2="72"/>
<line x1="631.5" y1="715" x2="631.5" y2="718"/>
<line x1="636.5" y1="68" x2="636.5" y2="77"/>
<line x1="636.5" y1="710" x2="636.5" y2="718"/>
<line x1="641.5" y1="68" x2="641.5" y2="72"/>
<line x1="641.5" y1="715" x2="641.5" y2="718"/>
<line x1="646.5" y1="68" x2="646.5" y2="72"/>
<line x1="646.5" y1="715" x2="646.5" y2="718"/>
<line x1="651.5" y1="68" x2="651.5" y2="72"/>
<line x1="651.5" y1="715" x2="651.5" y2="718"/>
<line x1="656.5" y1="68" x2="656.5" y2="72"/>
<line x1="656.5" y1="715" x2="656.5" y2="718"/>
<line x1="662.5" y1="68" x2="662.5" y2="75"/>
<line x1="662.5" y1="712" x2="662.5" y2="718"/>
<line x1="667.5" y1="68" x2="667.5" y2="72"/>
<line x1="667.5" y1="715" x2="667.5" y2="718"/>
<line x1="672.5" y1="68" x2="672.5" y2="72"/>
<line x1="672.5" y1="715" x2="672.5" y2="718"/>
<line x1="677.5" y1="68" x2="677.5" y2="72"/>
<line x1="677.5" y1="715" x2="677.5" y2="718"/>
<line x1="682.5" y1="68" x2="682.5" y2="72"/>
<line x1="682.5" y1="715" x2="682.5" y2="718"/>
<line x1="687.5" y1="68" x2="687.5" y2="77"/>
<line x1="687.5" y1="710" x2="687.5" y2="718"/>
<line x1="692.5" y1="68" x2="692.5" y2="72"/>
<line x1="692.5" y1="715" x2="692.5" y2="718"/>
<line x1="697.5" y1="68" x2="697.5" y2="72"/>
<line x1="697.5" y1="715" x2="697.5" y2="718"/>
<line x1="702.5" y1="68" x2="702.5" y2="72"/>
<line x1="702.5" y1="715" x2="702.5" y2="718"/>
<line x1="707.5" y1="68" x2="707.5" y2="72"/>
<line x1="707.5" y1="715" x2="707.5" y2="718"/>
<line x1="712.5" y1="68" x2="712.5" y2="75"/>
<line x1="712.5" y1="712" x2="712.5" y2="718"/>
<line x1="717.5" y1="68" x2="717.5" y2="72"/>
<line x1="717.5" y1="715" x2="717.5" y2="718"/>
<line x1="723.5" y1="68" x2="723.5" y2="72"/>
<line x1="723.5" y1="715" x2="723.5" y2="718"/>
<line x1="728.5" y1="68" x2="728.5" y2="72"/>
<line x1="728.5" y1="715" x2="728.5" y2="718"/>
<line x1="733.5" y1="68" x2="733.5" y2="72"/>
<line x1="733.5" y1="715" x2="733.5" y2="718"/>
<line x1="738.5" y1="68" x2="738.5" y2="77"/>
<line x1="738.5" y1="710" x2="738.5" y2="718"/>
<line x1="743.5" y1="68" x2="743.5" y2="72"/>
<line x1="743.5" y1="715" x2="743.5" y2="718"/>
<line x1="748.5" y1="68" x2="748.5" y2="72"/>
<line x1="748.5" y1="715" x2="748.5" y2="718"/>
<line x1="753.5" y1="68" x2="753.5" y2="72"/>
<line x1="753.5" y1="715" x2="753.5" y2="718"/>
<line x1="758.5" y1="68" x2="758.5" y2="72"/>
<line x1="758.5" y1="715" x2="758.5" y2="718"/>
<line x1="763.5" y1="68" x2="763.5" y2="75"/>
<line x1="763.5" y1="712" x2="763.5" y2="718"/>
<line x1="768.5" y1="68" x2="768.5" y2="72"/>
<line x1="768.5" y1="715" x2="768.5" y2="718"/>
<line x1="773.5" y1="68" x2="773.5" y2="72"/>
<line x1="773.5" y1="715" x2="773.5" y2="718"/>
<line x1="778.5" y1="68" x2="778.5" y2="72"/>
<line x1="778.5" y1="715" x2="778.5" y2="718"/>
<line x1="783.5" y1="68" x2="783.5" y2="72"/>
<line x1="783.5" y1="715" x2="783.5" y2="718"/>
<line x1="789.5" y1="68" x2="789.5" y2="77"/>
<line x1="789.5" y1="710" x2="789.5" y2="718"/>
<line x1="794.5" y1="68" x2="794.5" y2="72"/>
<line x1="794.5" y1="715" x2="794.5" y2="718"/>
<line x1="799.5" y1="68" x2="799.5" y2="72"/>
<line x1="799.5" y1="715" x2="799.5" y2="718"/>
<line x1="804.5" y1="68" x2="804.5" y2="72"/>
<line x1="804.5" y1="715" x2="804.5" y2="718"/>
<line x1="809.5" y1="68" x2="809.5" y2="72"/>
<line x1="809.5" y1="715" x2="809.5" y2="718"/>
<line x1="814.5" y1="68" x2="814.5" y2="75"/>
<line x1="814.5" y1="712" x2="814.5" y2="718"/>
<line x1="819.5" y1="68" x2="819.5" y2="72"/>
<line x1="819.5" y1="715" x2="819.5" y2="718"/>
<line x1="824.5" y1="68" x2="824.5" y2="72"/>
<line x1="824.5" y1="715" x2="824.5" y2="718"/>
<line x1="829.5" y1="68" x2="829.5" y2="72"/>
<line x1="829.5" y1="715" x2="829.5" y2="718"/>
<line x1="834.5" y1="68" x2="834.5" y2="72"/>
<line x1="834.5" y1="715" x2="834.5" y2="718"/>
<line x1="839.5" y1="68" x2="839.5" y2="77"/>
<line x1="839.5" y1="710" x2="839.5" y2="718"/>
<line x1="844.5" y1="68" x2="844.5" y2="72"/>
<line x1="844.5" y1="715" x2="844.5" y2="718"/>
<line x1="850.5" y1="68" x2="850.5" y2="72"/>
<line x1="850.5" y1="715" x2="850.5" y2="718"/>
<line x1="855.5" y1="68" x2="855.5" y2="72"/>
<line x1="855.5" y1="715" x2="855.5" y2="718"/>
<line x1="860.5" y1="68" x2="860.5" y2="72"/>
<line x1="860.5" y1="715" x2="860.5" y2="718"/>
<line x1="865.5" y1="68" x2="865.5" y2="75"/>
<line x1="865.5" y1="712" x2="865.5" y2="718"/>
<line x1="870.5" y1="68" x2="870.5" y2="72"/>
<line x1="870.5" y1="715" x2="870.5" y2="718"/>
<line x1="875.5" y1="68" x2="875.5" y2="72"/>
<line x1="875.5" y1="715" x2="875.5" y2="718"/>
<line x1="880.5" y1="68" x2="880.5" y2="72"/>
<line x1="880.5" y1="715" x2="880.5" y2="718"/>
<line x1="885.5" y1="68" x2="885.5" y2="72"/>
<line x1="885.5" y1="715" x2="885.5" y2="718"/>
<line x1="890.5" y1="68" x2="890.5" y2="77"/>
<line x1="890.5" y1="710" x2="890.5" y2="718"/>
<line x1="895.5" y1="68" x2="895.5" y2="72"/>
<line x1="895.5" y1="715" x2="895.5" y2="718"/>
<line x1="900.5" y1="68" x2="900.5" y2="72"/>
<line x1="900.5" y1="715" x2="900.5" y2="718"/>
<line x1="905.5" y1="68" x2="905.5" y2="72"/>
<line x1="905.5" y1="715" x2="905.5" y2="718"/>
<line x1="910.5" y1="68" x2="910.5" y2="72"/>
<line x1="910.5" y1="715" x2="910.5" y2="718"/>
<line x1="916.5" y1="68" x2="916.5" y2="75"/>
<line x1="916.5" y1="712" x2="916.5" y2="718"/>
<line x1="921.5" y1="68" x2="921.5" y2="72"/>
<line x1="921.5" y1="715" x2="921.5" y2="718"/>
<line x1="926.5" y1="68" x2="926.5" y2="72"/>
<line x1="926.5" y1="715" x2="926.5" y2="718"/>
<line x1="931.5" y1="68" x2="931.5" y2="72"/>
<line x1="931.5" y1="715" x2="931.5" y2="718"/>
<line x1="936.5" y1="68" x2="936.5" y2="72"/>
<line x1="936.5" y1="715" x2="936.5" y2="718"/>
<line x1="941.5" y1="68" x2="941.5" y2="77"/>
<line x1="941.5" y1="710" x2="941.5" y2="718"/>
<line x1="946.5" y1="68" x2="946.5" y2="72"/>
<line x1="946.5" y1="715" x2="946.5" y2="718"/>
<line x1="951.5" y1="68" x2="951.5" y2="72"/>
<line x1="951.5" y1="715" x2="951.5" y2="718"/>
<line x1="956.5" y1="68" x2="956.5" y2="72"/>
<line x1="956.5" y1="715" x2="956.5" y2="718"/>
<line x1="961.5" y1="68" x2="961.5" y2="72"/>
<line x1="961.5" y1="715" x2="961.5" y2="718"/>
<line x1="966.5" y1="68" x2="966.5" y2="75"/>
<line x1="966.5" y1="712" x2="966.5" y2="718"/>
<line x1="971.5" y1="68" x2="971.5" y2="72"/>
<line x1="971.5" y1="715" x2="971.5" y2="718"/>
<line x1="976.5" y1="68" x2="976.5" y2="72"/>
<line x1="976.5" y1="715" x2="976.5" y2="718"/>
<line x1="982.5" y1="68" x2="982.5" y2="72"/>
<line x1="982.5" y1="715" x2="982.5" y2="718"/>
<line x1="987.5" y1="68" x2="987.5" y2="72"/>
<line x1="987.5" y1="715" x2="987.5" y2="718"/>
<line x1="992.5" y1="68" x2="992.5" y2="77"/>
<line x1="992.5" y1="710" x2="992.5" y2="718"/>
<line x1="342" y1="715.5" x2="345" y2="715.5"/>
<line x1="990" y1="715.5" x2="993" y2="715.5"/>
<line x1="342" y1="713.5" x2="345" y2="713.5"/>
<line x1="990" y1="713.5" x2="993" y2="713.5"/>
<line x1="342" y1="710.5" x2="345" y2="710.5"/>
<line x1="990" y1="710.5" x2="993" y2="710.5"/>
<line x1="342" y1="707.5" x2="345" y2="707.5"/>
<line x1="990" y1="707.5" x2="993" y2="707.5"/>
<line x1="342" y1="705.5" x2="348" y2="705.5"/>
<line x1="987" y1="705.5" x2="993" y2="705.5"/>
<line x1="342" y1="702.5" x2="345" y2="702.5"/>
<line x1="990" y1="702.5" x2="993" y2="702.5"/>
<line x1="342" y1="699.5" x2="345" y2="699.5"/>
<line x1="990" y1="699.5" x2="993" y2="699.5"/>
<line x1="342" y1="697.5" x2="345" y2="697.5"/>
<line x1="990" y1="697.5" x2="993" y2="697.5"/>
<line x1="342" y1="694.5" x2="345" y2="694.5"/>
<line x1="990" y1="694.5" x2="993" y2="694.5"/>
<line x1="342" y1="691.5" x2="352" y2="691.5"/>
<line x1="983" y1="691.5" x2="993" y2="691.5"/>
<line x1="342" y1="688.5" x2="345" y2="688.5"/>
<line x1="990" y1="688.5" x2="993" y2="688.5"/>
<line x1="342" y1="686.5" x2="345" y2="686.5"/>
<line x1="990" y1="686.5" x2="993" y2="686.5"/>
<line x1="342" y1="683.5" x2="345" y2="683.5"/>
<line x1="990" y1="683.5" x2="993" y2="683.5"/>
<line x1="342" y1="680.5" x2="345" y2="680.5"/>
<line x1="990" y1="680.5" x2="993" y2="680.5"/>
<line x1="342" y1="678.5" x2="348" y2="678.5"/>
<line x1="987" y1="678.5" x2="993" y2="678.5"/>
<line x1="342" y1="675.5" x2="345" y2="675.5"/>
<line x1="990" y1="675.5" x2="993" y2="675.5"/>
<line x1="342" y1="672.5" x2="345" y2="672.5"/>
<line x1="990" y1="672.5" x2="993" y2="672.5"/>
<line x1="342" y1="669.5" x2="345" y2="669.5"/>
<line x1="990" y1="669.5" x2="993" y2="669.5"/>
<line x1="342" y1="667.5" x2="345" y2="667.5"/>
<line x1="990" y1="667.5" x2="993" y2="667.5"/>
<line x1="342" y1="664.5" x2="352" y2="664.5"/>
<line x1="983" y1="664.5" x2="993" y2="664.5"/>
<line x1="342" y1="661.5" x2="345" y2="661.5"/>
<line x1="990" y1="661.5" x2="993" y2="661.5"/>
<line x1="342" y1="659.5" x2="345" y2="659.5"/>
<line x1="990" y1="659.5" x2="993" y2="659.5"/>
<line x1="342" y1="656.5" x2="345" y2="656.5"/>
<line x1="990" y1="656.5" x2="993" y2="656.5"/>
<line x1="342" y1="653.5" x2="345" y2="653.5"/>
<line x1="990" y1="653.5" x2="993" y2="653.5"/>
<line x1="342" y1="650.5" x2="348" y2="650.5"/>
<line x1="987" y1="650.5" x2="993" y2="650.5"/>
<line x1="342" y1="648.5" x2="345" y2="648.5"/>
<line x1="990" y1="648.5" x2="993" y2="648.5"/>
<line x1="342" y1="645.5" x2="345" y2="645.5"/>
<line x1="990" y1="645.5" x2="993" y2="645.5"/>
<line x1="342" y1="642.5" x2="345" y2="642.5"/>
<line x1="990" y1="642.5" x2="993" y2="642.5"/>
<line x1="342" y1="640.5" x2="345" y2="640.5"/>
<line x1="990" y1="640.5" x2="993" y2="640.5"/>
<line x1="342" y1="637.5" x2="352" y2="637.5"/>
<line x1="983" y1="637.5" x2="993" y2="637.5"/>
<line x1="342" y1="634.5" x2="345" y2="634.5"/>
<line x1="990" y1="634.5" x2="993" y2="634.5"/>
<line x1="342" y1="631.5" x2="345" y2="631.5"/>
<line x1="990" y1="631.5" x2="993" y2="631.5"/>
<line x1="342" y1="629.5" x2="345" y2="629.5"/>
<line x1="990" y1="629.5" x2="993" y2="629.5"/>
<line x1="342" y1="626.5" x2="345" y2="626.5"/>
<line x1="990" y1="626.5" x2="993" y2="626.5"/>
<line x1="342" y1="623.5" x2="348" y2="623.5"/>
<line x1="987" y1="623.5" x2="993" y2="623.5"/>
<line x1="342" y1="621.5" x2="345" y2="621.5"/>
<line x1="990" y1="621.5" x2="993" y2="621.5"/>
<line x1="342" y1="618.5" x2="345" y2="618.5"/>
<line x1="990" y1="618.5" x2="993" y2="618.5"/>
<line x1="342" y1="615.5" x2="345" y2="615.5"/>
<line x1="990" y1="615.5" x2="993" y2="615.5"/>
<line x1="342" y1="613.5" x2="345" y2="613.5"/>
<line x1="990" y1="613.5" x2="993" y2="613.5"/>
<line x1="342" y1="610.5" x2="352" y2="610.5"/>
<line x1="983" y1="610.5" x2="993" y2="610.5"/>
<line x1="342" y1="607.5" x2="345" y2="607.5"/>
<line x1="990" y1="607.5" x2="993" y2="607.5"/>
<line x1="342" y1="604.5" x2="345" y2="604.5"/>
<line x1="990" y1="604.5" x2="993" y2="604.5"/>
<line x1="342" y1="602.5" x2="345" y2="602.5"/>
<line x1="990" y1="602.5" x2="993" y2="602.5"/>
<line x1="342" y1="599.5" x2="345" y2="599.5"/>
<line x1="990" y1="599.5" x2="993" y2="599.5"/>
<line x1="342" y1="596.5" x2="348" y2="596.5"/>
<line x1="987" y1="596.5" x2="993" y2="596.5"/>
<line x1="342" y1="594.5" x2="345" y2="594.5"/>
<line x1="990" y1="594.5" x2="993" y2="594.5"/>
<line x1="342" y1="591.5" x2="345" y2="591.5"/>
<line x1="990" y1="591.5" x2="993" y2="591.5"/>
<line x1="342" y1="588.5" x2="345" y2="588.5"/>
<line x1="990" y1="588.5" x2="993" y2="588.5"/>
<line x1="342" y1="585.5" x2="345" y2="585.5"/>
<line x1="990" y1="585.5" x2="993" y2="585.5"/>
<line x1="342" y1="583.5" x2="352" y2="583.5"/>
<line x1="983" y1="583.5" x2="993" y2="583.5"/>
<line x1="342" y1="580.5" x2="345" y2="580.5"/>
<line x1="990" y1="580.5" x2="993" y2="580.5"/>
<line x1="342" y1="577.5" x2="345" y2="577.5"/>
<line x1="990" y1="577.5" x2="993" y2="577.5"/>
<line x1="342" y1="575.5" x2="345" y2="575.5"/>
<line x1="990" y1="575.5" x2="993" y2="575.5"/>
<line x1="342" y1="572.5" x2="345" y2="572.5"/>
<line x1="990" y1="572.5" x2="993" y2="572.5"/>
<line x1="342" y1="569.5" x2="348" y2="569.5"/>
<line x1="987" y1="569.5" x2="993" y2="569.5"/>
<line x1="342" y1="566.5" x2="345" y2="566.5"/>
<line x1="990" y1="566.5" x2="993" y2="566.5"/>
<line x1="342" y1="564.5" x2="345" y2="564.5"/>
<line x1="990" y1="564.5" x2="993" y2="564.5"/>
<line x1="342" y1="561.5" x2="345" y2="561.5"/>
<line x1="990" y1="561.5" x2="993" y2="561.5"/>
<line x1="342" y1="558.5" x2="345" y2="558.5"/>
<line x1="990" y1="558.5" x2="993" y2="558.5"/>
<line x1="342" y1="556.5" x2="352" y2="556.5"/>
<line x1="983" y1="556.5" x2="993" y2="556.5"/>
<line x1="342" y1="553.5" x2="345" y2="553.5"/>
<line x1="990" y1="553.5" x2="993" y2="553.5"/>
<line x1="342" y1="550.5" x2="345" y2="550.5"/>
<line x1="990" y1="550.5" x2="993" y2="550.5"/>
<line x1="342" y1="548.5" x2="345" y2="548.5"/>
<line x1="990" y1="548.5" x2="993" y2="548.5"/>
<line x1="342" y1="545.5" x2="345" y2="545.5"/>
<line x1="990" y1="545.5" x2="993" y2="545.5"/>
<line x1="342" y1="542.5" x2="348" y2="542.5"/>
<line x1="987" y1="542.5" x2="993" y2="542.5"/>
<line x1="342" y1="539.5" x2="345" y2="539.5"/>
<line x1="990" y1="539.5" x2="993" y2="539.5"/>
<line x1="342" y1="537.5" x2="345" y2="537.5"/>
<line x1="990" y1="537.5" x2="993" y2="537.5"/>
<line x1="342" y1="534.5" x2="345" y2="534.5"/>
<line x1="990" y1="534.5" x2="993" y2="534.5"/>
<line x1="342" y1="531.5" x2="345" y2="531.5"/>
<line x1="990" y1="531.5" x2="993" y2="531.5"/>
<line x1="342" y1="529.5" x2="352" y2="529.5"/>
<line x1="983" y1="529.5" x2="993" y2="529.5"/>
<line x1="342" y1="526.5" x2="345" y2="526.5"/>
<line x1="990" y1="526.5" x2="993" y2="526.5"/>
<line x1="342" y1="523.5" x2="345" y2="523.5"/>
<line x1="990" y1="523.5" x2="993" y2="523.5"/>
<line x1="342" y1="520.5" x2="345" y2="520.5"/>
<line x1="990" y1="520.5" x2="993" y2="520.5"/>
<line x1="342" y1="518.5" x2="345" y2="518.5"/>
<line x1="990" y1="518.5" x2="993" y2="518.5"/>
<line x1="342" y1="515.5" x2="348" y2="515.5"/>
<line x1="987" y1="515.5" x2="993" y2="515.5"/>
<line x1="342" y1="512.5" x2="345" y2="512.5"/>
<line x1="990" y1="512.5" x2="993" y2="512.5"/>
<line x1="342" y1="510.5" x2="345" y2="510.5"/>
<line x1="990" y1="510.5" x2="993" y2="510.5"/>
<line x1="342" y1="507.5" x2="345" y2="507.5"/>
<line x1="990" y1="507.5" x2="993" y2="507.5"/>
<line x1="342" y1="504.5" x2="345" y2="504.5"/>
<line x1="990" y1="504.5" x2="993" y2="504.5"/>
<line x1="342" y1="501.5" x2="352" y2="501.5"/>
<line x1="983" y1="501.5" x2="993" y2="501.5"/>
<line x1="342" y1="499.5" x2="345" y2="499.5"/>
<line x1="990" y1="499.5" x2="993" y2="499.5"/>
<line x1="342" y1="496.5" x2="345" y2="496.5"/>
<line x1="990" y1="496.5" x2="993" y2="496.5"/>
<line x1="342" y1="493.5" x2="345" y2="493.5"/>
<line x1="990" y1="493.5" x2="993" y2="493.5"/>
<line x1="342" y1="491.5" x2="345" y2="491.5"/>
<line x1="990" y1="491.5" x2="993" y2="491.5"/>
<line x1="342" y1="488.5" x2="348" y2="488.5"/>
<line x1="987" y1="488.5" x2="993" y2="488.5"/>
<line x1="342" y1="485.5" x2="345" y2="485.5"/>
<line x1="990" y1="485.5" x2="993" y2="485.5"/>
<line x1="342" y1="482.5" x2="345" y2="482.5"/>
<line x1="990" y1="482.5" x2="993" y2="482.5"/>
<line x1="342" y1="480.5" x2="345" y2="480.5"/>
<line x1="990" y1="480.5" x2="993" y2="480.5"/>
<line x1="342" y1="477.5" x2="345" y2="477.5"/>
<line x1="990" y1="477.5" x2="993" y2="477.5"/>
<line x1="342" y1="474.5" x2="352" y2="474.5"/>
<line x1="983" y1="474.5" x2="993" y2="474.5"/>
<line x1="342" y1="472.5" x2="345" y2="472.5"/>
<line x1="990" y1="472.5" x2="993" y2="472.5"/>
<line x1="342" y1="469.5" x2="345" y2="469.5"/>
<line x1="990" y1="469.5" x2="993" y2="469.5"/>
<line x1="342" y1="466.5" x2="345" y2="466.5"/>
<line x1="990" y1="466.5" x2="993" y2="466.5"/>
<line x1="342" y1="464.5" x2="345" y2="464.5"/>
<line x1="990" y1="464.5" x2="993" y2="464.5"/>
<line x1="342" y1="461.5" x2="348" y2="461.5"/>
<line x1="987" y1="461.5" x2="993" y2="461.5"/>
<line x1="342" y1="458.5" x2="345" y2="458.5"/>
<line x1="990" y1="458.5" x2="993" y2="458.5"/>
<line x1="342" y1="455.5" x2="345" y2="455.5"/>
<line x1="990" y1="455.5" x2="993" y2="455.5"/>
<line x1="342" y1="453.5" x2="345" y2="453.5"/>
<line x1="990" y1="453.5" x2="993" y2="453.5"/>
<line x1="342" y1="450.5" x2="345" y2="450.5"/>
<line x1="990" y1="450.5" x2="993" y2="450.5"/>
<line x1="342" y1="447.5" x2="352" y2="447.5"/>
<line x1="983" y1="447.5" x2="993" y2="447.5"/>
<line x1="342" y1="445.5" x2="345" y2="445.5"/>
<line x1="990" y1="445.5" x2="993" y2="445.5"/>
<line x1="342" y1="442.5" x2="345" y2="442.5"/>
<line x1="990" y1="442.5" x2="993" y2="442.5"/>
<line x1="342" y1="439.5" x2="345" y2="439.5"/>
<line x1="990" y1="439.5" x2="993" y2="439.5"/>
<line x1="342" y1="436.5" x2="345" y2="436.5"/>
<line x1="990" y1="436.5" x2="993" y2="436.5"/>
<line x1="342" y1="434.5" x2="348" y2="434.5"/>
<line x1="987" y1="434.5" x2="993" y2="434.5"/>
<line x1="342" y1="431.5" x2="345" y2="431.5"/>
<line x1="990" y1="431.5" x2="993" y2="431.5"/>
<line x1="342" y1="428.5" x2="345" y2="428.5"/>
<line x1="990" y1="428.5" x2="993" y2="428.5"/>
<line x1="342" y1="426.5" x2="345" y2="426.5"/>
<line x1="990" y1="426.5" x2="993" y2="426.5"/>
<line x1="342" y1="423.5" x2="345" y2="423.5"/>
<line x1="990" y1="423.5" x2="993" y2="423.5"/>
<line x1="342" y1="420.5" x2="352" y2="420.5"/>
<line x1="983" y1="420.5" x2="993" y2="420.5"/>
<line x1="342" y1="417.5" x2="345" y2="417.5"/>
<line x1="990" y1="417.5" x2="993" y2="417.5"/>
<line x1="342" y1="415.5" x2="345" y2="415.5"/>
<line x1="990" y1="415.5" x2="993" y2="415.5"/>
<line x1="342" y1="412.5" x2="345" y2="412.5"/>
<line x1="990" y1="412.5" x2="993" y2="412.5"/>
<line x1="342" y1="409.5" x2="345" y2="409.5"/>
<line x1="990" y1="409.5" x2="993" y2="409.5"/>
<line x1="342" y1="407.5" x2="348" y2="407.5"/>
<line x1="987" y1="407.5" x2="993" y2="407.5"/>
<line x1="342" y1="404.5" x2="345" y2="404.5"/>
<line x1="990" y1="404.5" x2="993" y2="404.5"/>
<line x1="342" y1="401.5" x2="345" y2="401.5"/>
<line x1="990" y1="401.5" x2="993" y2="401.5"/>
<line x1="342" y1="399.5" x2="345" y2="399.5"/>
<line x1="990" y1="399.5" x2="993" y2="399.5"/>
<line x1="342" y1="396.5" x2="345" y2="396.5"/>
<line x1="990" y1="396.5" x2="993" y2="396.5"/>
<line x1="342" y1="393.5" x2="352" y2="393.5"/>
<line x1="983" y1="393.5" x2="993" y2="393.5"/>
<line x1="342" y1="390.5" x2="345" y2="390.5"/>
<line x1="990" y1="390.5" x2="993" y2="390.5"/>
<line x1="342" y1="388.5" x2="345" y2="388.5"/>
<line x1="990" y1="388.5" x2="993" y2="388.5"/>
<line x1="342" y1="385.5" x2="345" y2="385.5"/>
<line x1="990" y1="385.5" x2="993" y2="385.5"/>
<line x1="342" y1="382.5" x2="345" y2="382.5"/>
<line x1="990" y1="382.5" x2="993" y2="382.5"/>
<line x1="342" y1="380.5" x2="348" y2="380.5"/>
<line x1="987" y1="380.5" x2="993" y2="380.5"/>
<line x1="342" y1="377.5" x2="345" y2="377.5"/>
<line x1="990" y1="377.5" x2="993" y2="377.5"/>
<line x1="342" y1="374.5" x2="345" y2="374.5"/>
<line x1="990" y1="374.5" x2="993" y2="374.5"/>
<line x1="342" y1="371.5" x2="345" y2="371.5"/>
<line x1="990" y1="371.5" x2="993" y2="371.5"/>
<line x1="342" y1="369.5" x2="345" y2="369.5"/>
<line x1="990" y1="369.5" x2="993" y2="369.5"/>
<line x1="342" y1="366.5" x2="352" y2="366.5"/>
<line x1="983" y1="366.5" x2="993" y2="366.5"/>
<line x1="342" y1="363.5" x2="345" y2="363.5"/>
<line x1="990" y1="363.5" x2="993" y2="363.5"/>
<line x1="342" y1="361.5" x2="345" y2="361.5"/>
<line x1="990" y1="361.5" x2="993" y2="361.5"/>
<line x1="342" y1="358.5" x2="345" y2="358.5"/>
<line x1="990" y1="358.5" x2="993" y2="358.5"/>
<line x1="342" y1="355.5" x2="345" y2="355.5"/>
<line x1="990" y1="355.5" x2="993" y2="355.5"/>
<line x1="342" y1="352.5" x2="348" y2="352.5"/>
<line x1="987" y1="352.5" x2="993" y2="352.5"/>
<line x1="342" y1="350.5" x2="345" y2="350.5"/>
<line x1="990" y1="350.5" x2="993" y2="350.5"/>
<line x1="342" y1="347.5" x2="345" y2="347.5"/>
<line x1="990" y1="347.5" x2="993" y2="347.5"/>
<line x1="342" y1="344.5" x2="345" y2="344.5"/>
<line x1="990" y1="344.5" x2="993" y2="344.5"/>
<line x1="342" y1="342.5" x2="345" y2="342.5"/>
<line x1="990" y1="342.5" x2="993" y2="342.5"/>
<line x1="342" y1="339.5" x2="352" y2="339.5"/>
<line x1="983" y1="339.5" x2="993" y2="339.5"/>
<line x1="342" y1="336.5" x2="345" y2="336.5"/>
<line x1="990" y1="336.5" x2="993" y2="336.5"/>
<line x1="342" y1="334.5" x2="345" y2="334.5"/>
<line x1="990" y1="334.5" x2="993" y2="334.5"/>
<line x1="342" y1="331.5" x2="345" y2="331.5"/>
<line x1="990" y1="331.5" x2="993" y2="331.5"/>
<line x1="342" y1="328.5" x2="345" y2="328.5"/>
<line x1="990" y1="328.5" x2="993" y2="328.5"/>
<line x1="342" y1="325.5" x2="348" y2="325.5"/>
<line x1="987" y1="325.5" x2="993" y2="325.5"/>
<line x1="342" y1="323.5" x2="345" y2="323.5"/>
<line x1="990" y1="323.5" x2="993" y2="323.5"/>
<line x1="342" y1="320.5" x2="345" y2="320.5"/>
<line x1="990" y1="320.5" x2="993" y2="320.5"/>
<line x1="342" y1="317.5" x2="345" y2="317.5"/>
<line x1="990" y1="317.5" x2="993" y2="317.5"/>
<line x1="342" y1="315.5" x2="345" y2="315.5"/>
<line x1="990" y1="315.5" x2="993" y2="315.5"/>
<line x1="342" y1="312.5" x2="352" y2="312.5"/>
<line x1="983" y1="312.5" x2="993" y2="312.5"/>
<line x1="342" y1="309.5" x2="345" y2="309.5"/>
<line x1="990" y1="309.5" x2="993" y2="309.5"/>
<line x1="342" y1="306.5" x2="345" y2="306.5"/>
<line x1="990" y1="306.5" x2="993" y2="306.5"/>
<line x1="342" y1="304.5" x2="345" y2="304.5"/>
<line x1="990" y1="304.5" x2="993" y2="304.5"/>
<line x1="342" y1="301.5" x2="345" y2="301.5"/>
<line x1="990" y1="301.5" x2="993" y2="301.5"/>
<line x1="342" y1="298.5" x2="348" y2="298.5"/>
<line x1="987" y1="298.5" x2="993" y2="298.5"/>
<line x1="342" y1="296.5" x2="345" y2="296.5"/>
<line x1="990" y1="296.5" x2="993" y2="296.5"/>
<line x1="342" y1="293.5" x2="345" y2="293.5"/>
<line x1="990" y1="293.5" x2="993" y2="293.5"/>
<line x1="342" y1="290.5" x2="345" y2="290.5"/>
<line x1="990" y1="290.5" x2="993" y2="290.5"/>
<line x1="342" y1="287.5" x2="345" y2="287.5"/>
<line x1="990" y1="287.5" x2="993" y2="287.5"/>
<line x1="342" y1="285.5" x2="352" y2="285.5"/>
<line x1="983" y1="285.5" x2="993" y2="285.5"/>
<line x1="342" y1="282.5" x2="345" y2="282.5"/>
<line x1="990" y1="282.5" x2="993" y2="282.5"/>
<line x1="342" y1="279.5" x2="345" y2="279.5"/>
<line x1="990" y1="279.5" x2="993" y2="279.5"/>
<line x1="342" y1="277.5" x2="345" y2="277.5"/>
<line x1="990" y1="277.5" x2="993" y2="277.5"/>
<line x1="342" y1="274.5" x2="345" y2="274.5"/>
<line x1="990" y1="274.5" x2="993" y2="274.5"/>
<line x1="342" y1="271.5" x2="348" y2="271.5"/>
<line x1="987" y1="271.5" x2="993" y2="271.5"/>
<line x1="342" y1="268.5" x2="345" y2="268.5"/>
<line x1="990" y1="268.5" x2="993" y2="268.5"/>
<line x1="342" y1="266.5" x2="345" y2="266.5"/>
<line x1="990" y1="266.5" x2="993" y2="266.5"/>
<line x1="342" y1="263.5" x2="345" y2="263.5"/>
<line x1="990" y1="263.5" x2="993" y2="263.5"/>
<line x1="342" y1="260.5" x2="345" y2="260.5"/>
<line x1="990" y1="260.5" x2="993" y2="260.5"/>
<line x1="342" y1="258.5" x2="352" y2="258.5"/>
<line x1="983" y1="258.5" x2="993" y2="258.5"/>
<line x1="342" y1="255.5" x2="345" y2="255.5"/>
<line x1="990" y1="255.5" x2="993" y2="255.5"/>
<line x1="342" y1="252.5" x2="345" y2="252.5"/>
<line x1="990" y1="252.5" x2="993" y2="252.5"/>
<line x1="342" y1="250.5" x2="345" y2="250.5"/>
<line x1="990" y1="250.5" x2="993" y2="250.5"/>
<line x1="342" y1="247.5" x2="345" y2="247.5"/>
<line x1="990" y1="247.5" x2="993" y2="247.5"/>
<line x1="342" y1="244.5" x2="348" y2="244.5"/>
<line x1="987" y1="244.5" x2="993" y2="244.5"/>
<line x1="342" y1="241.5" x2="345" y2="241.5"/>
<line x1="990" y1="241.5" x2="993" y2="241.5"/>
<line x1="342" y1="239.5" x2="345" y2="239.5"/>
<line x1="990" y1="239.5" x2="993" y2="239.5"/>
<line x1="342" y1="236.5" x2="345" y2="236.5"/>
<line x1="990" y1="236.5" x2="993" y2="236.5"/>
<line x1="342" y1="233.5" x2="345" y2="233.5"/>
<line x1="990" y1="233.5" x2="993" y2="233.5"/>
<line x1="342" y1="231.5" x2="352" y2="231.5"/>
<line x1="983" y1="231.5" x2="993" y2="231.5"/>
<line x1="342" y1="228.5" x2="345" y2="228.5"/>
<line x1="990" y1="228.5" x2="993" y2="228.5"/>
<line x1="342" y1="225.5" x2="345" y2="225.5"/>
<line x1="990" y1="225.5" x2="993" y2="225.5"/>
<line x1="342" y1="222.5" x2="345" y2="222.5"/>
<line x1="990" y1="222.5" x2="993" y2="222.5"/>
<line x1="342" y1="220.5" x2="345" y2="220.5"/>
<line x1="990" y1="220.5" x2="993" y2="220.5"/>
<line x1="342" y1="217.5" x2="348" y2="217.5"/>
<line x1="987" y1="217.5" x2="993" y2="217.5"/>
<line x1="342" y1="214.5" x2="345" y2="214.5"/>
<line x1="990" y1="214.5" x2="993" y2="214.5"/>
<line x1="342" y1="212.5" x2="345" y2="212.5"/>
<line x1="990" y1="212.5" x2="993" y2="212.5"/>
<line x1="342" y1="209.5" x2="345" y2="209.5"/>
<line x1="990" y1="209.5" x2="993" y2="209.5"/>
<line x1="342" y1="206.5" x2="345" y2="206.5"/>
<line x1="990" y1="206.5" x2="993" y2="206.5"/>
<line x1="342" y1="203.5" x2="352" y2="203.5"/>
<line x1="983" y1="203.5" x2="993" y2="203.5"/>
<line x1="342" y1="201.5" x2="345" y2="201.5"/>
<line x1="990" y1="201.5" x2="993" y2="201.5"/>
<line x1="342" y1="198.5" x2="345" y2="198.5"/>
<line x1="990" y1="198.5" x2="993" y2="198.5"/>
<line x1="342" y1="195.5" x2="345" y2="195.5"/>
<line x1="990" y1="195.5" x2="993" y2="195.5"/>
<line x1="342" y1="193.5" x2="345" y2="193.5"/>
<line x1="990" y1="193.5" x2="993" y2="193.5"/>
<line x1="342" y1="190.5" x2="348" y2="190.5"/>
<line x1="987" y1="190.5" x2="993" y2="190.5"/>
<line x1="342" y1="187.5" x2="345" y2="187.5"/>
<line x1="990" y1="187.5" x2="993" y2="187.5"/>
<line x1="342" y1="185.5" x2="345" y2="185.5"/>
<line x1="990" y1="185.5" x2="993" y2="185.5"/>
<line x1="342" y1="182.5" x2="345" y2="182.5"/>
<line x1="990" y1="182.5" x2="993" y2="182.5"/>
<line x1="342" y1="179.5" x2="345" y2="179.5"/>
<line x1="990" y1="179.5" x2="993" y2="179.5"/>
<line x1="342" y1="176.5" x2="352" y2="176.5"/>
<line x1="983" y1="176.5" x2="993" y2="176.5"/>
<line x1="342" y1="174.5" x2="345" y2="174.5"/>
<line x1="990" y1="174.5" x2="993" y2="174.5"/>
<line x1="342" y1="171.5" x2="345" y2="171.5"/>
<line x1="990" y1="171.5" x2="993" y2="171.5"/>
<line x1="342" y1="168.5" x2="345" y2="168.5"/>
<line x1="990" y1="168.5" x2="993" y2="168.5"/>
<line x1="342" y1="166.5" x2="345" y2="166.5"/>
<line x1="990" y1="166.5" x2="993" y2="166.5"/>
<line x1="342" y1="163.5" x2="348" y2="163.5"/>
<line x1="987" y1="163.5" x2="993" y2="163.5"/>
<line x1="342" y1="160.5" x2="345" y2="160.5"/>
<line x1="990" y1="160.5" x2="993" y2="160.5"/>
<line x1="342" y1="157.5" x2="345" y2="157.5"/>
<line x1="990" y1="157.5" x2="993" y2="157.5"/>
<line x1="342" y1="155.5" x2="345" y2="155.5"/>
<line x1="990" y1="155.5" x2="993" y2="155.5"/>
<line x1="342" y1="152.5" x2="345" y2="152.5"/>
<line x1="990" y1="152.5" x2="993" y2="152.5"/>
<line x1="342" y1="149.5" x2="352" y2="149.5"/>
<line x1="983" y1="149.5" x2="993" y2="149.5"/>
<line x1="342" y1="147.5" x2="345" y2="147.5"/>
<line x1="990" y1="147.5" x2="993" y2="147.5"/>
<line x1="342" y1="144.5" x2="345" y2="144.5"/>
<line x1="990" y1="144.5" x2="993" y2="144.5"/>
<line x1="342" y1="141.5" x2="345" y2="141.5"/>
<line x1="990" y1="141.5" x2="993" y2="141.5"/>
<line x1="342" y1="138.5" x2="345" y2="138.5"/>
<line x1="990" y1="138.5" x2="993" y2="138.5"/>
<line x1="342" y1="136.5" x2="348" y2="136.5"/>
<line x1="987" y1="136.5" x2="993" y2="136.5"/>
<line x1="342" y1="133.5" x2="345" y2="133.5"/>
<line x1="990" y1="133.5" x2="993" y2="133.5"/>
<line x1="342" y1="130.5" x2="345" y2="130.5"/>
<line x1="990" y1="130.5" x2="993" y2="130.5"/>
<line x1="342" y1="128.5" x2="345" y2="128.5"/>
<line x1="990" y1="128.5" x2="993" y2="128.5"/>
<line x1="342" y1="125.5" x2="345" y2="125.5"/>
<line x1="990" y1="125.5" x2="993" y2="125.5"/>
<line x1="342" y1="122.5" x2="352" y2="122.5"/>
<line x1="983" y1="122.5" x2="993" y2="122.5"/>
<line x1="342" y1="119.5" x2="345" y2="119.5"/>
<line x1="990" y1="119.5" x2="993" y2="119.5"/>
<line x1="342" y1="117.5" x2="345" y2="117.5"/>
<line x1="990" y1="117.5" x2="993" y2="117.5"/>
<line x1="342" y1="114.5" x2="345" y2="114.5"/>
<line x1="990" y1="114.5" x2="993" y2="114.5"/>
<line x1="342" y1="111.5" x2="345" y2="111.5"/>
<line x1="990" y1="111.5" x2="993" y2="111.5"/>
<line x1="342" y1="109.5" x2="348" y2="109.5"/>
<line x1="987" y1="109.5" x2="993" y2="109.5"/>
<line x1="342" y1="106.5" x2="345" y2="106.5"/>
<line x1="990" y1="106.5" x2="993" y2="106.5"/>
<line x1="342" y1="103.5" x2="345" y2="103.5"/>
<line x1="990" y1="103.5" x2="993" y2="103.5"/>
<line x1="342" y1="101.5" x2="345" y2="101.5"/>
<line x1="990" y1="101.5" x2="993" y2="101.5"/>
<line x1="342" y1="98.5" x2="345" y2="98.5"/>
<line x1="990" y1="98.5" x2="993" y2="98.5"/>
<line x1="342" y1="95.5" x2="352" y2="95.5"/>
<line x1="983" y1="95.5" x2="993" y2="95.5"/>
<line x1="342" y1="92.5" x2="345" y2="92.5"/>
<line x1="990" y1="92.5" x2="993" y2="92.5"/>
<line x1="342" y1="90.5" x2="345" y2="90.5"/>
<line x1="990" y1="90.5" x2="993" y2="90.5"/>
<line x1="342" y1="87.5" x2="345" y2="87.5"/>
<line x1="990" y1="87.5" x2="993" y2="87.5"/>
<line x1="342" y1="84.5" x2="345" y2="84.5"/>
<line x1="990" y1="84.5" x2="993" y2="84.5"/>
<line x1="342" y1="82.5" x2="348" y2="82.5"/>
<line x1="987" y1="82.5" x2="993" y2="82.5"/>
<line x1="342" y1="79.5" x2="345" y2="79.5"/>
<line x1="990" y1="79.5" x2="993" y2="79.5"/>
<line x1="342" y1="76.5" x2="345" y2="76.5"/>
<line x1="990" y1="76.5" x2="993" y2="76.5"/>
<line x1="342" y1="73.5" x2="345" y2="73.5"/>
<line x1="990" y1="73.5" x2="993" y2="73.5"/>
<line x1="342" y1="71.5" x2="345" y2="71.5"/>
<line x1="990" y1="71.5" x2="993" y2="71.5"/>
<line x1="342" y1="68.5" x2="352" y2="68.5"/>
<line x1="983" y1="68.5" x2="993" y2="68.5"/>
<line x1="304" y1="716.5" x2="307" y2="716.5"/>
<line x1="304" y1="712.5" x2="307" y2="712.5"/>
<line x1="304" y1="708.5" x2="307" y2="708.5"/>
<line x1="304" y1="705.5" x2="307" y2="705.5"/>
<line x1="298" y1="701.5" x2="307" y2="701.5"/>
<line x1="304" y1="697.5" x2="307" y2="697.5"/>
<line x1="304" y1="693.5" x2="307" y2="693.5"/>
<line x1="304" y1="690.5" x2="307" y2="690.5"/>
<line x1="304" y1="686.5" x2="307" y2="686.5"/>
<line x1="301" y1="682.5" x2="307" y2="682.5"/>
<line x1="304" y1="679.5" x2="307" y2="679.5"/>
<line x1="304" y1="675.5" x2="307" y2="675.5"/>
<line x1="304" y1="671.5" x2="307" y2="671.5"/>
<line x1="304" y1="668.5" x2="307" y2="668.5"/>
<line x1="298" y1="664.5" x2="307" y2="664.5"/>
<line x1="304" y1="660.5" x2="307" y2="660.5"/>
<line x1="304" y1="657.5" x2="307" y2="657.5"/>
<line x1="304" y1="653.5" x2="307" y2="653.5"/>
<line x1="304" y1="649.5" x2="307" y2="649.5"/>
<line x1="301" y1="646.5" x2="307" y2="646.5"/>
<line x1="304" y1="642.5" x2="307" y2="642.5"/>
<line x1="304" y1="638.5" x2="307" y2="638.5"/>
<line x1="304" y1="635.5" x2="307" y2="635.5"/>
<line x1="304" y1="631.5" x2="307" y2="631.5"/>
<line x1="298" y1="627.5" x2="307" y2="627.5"/>
<line x1="304" y1="623.5" x2="307" y2="623.5"/>
<line x1="304" y1="620.5" x2="307" y2="620.5"/>
<line x1="304" y1="616.5" x2="307" y2="616.5"/>
<line x1="304" y1="612.5" x2="307" y2="612.5"/>
<line x1="301" y1="609.5" x2="307" y2="609.5"/>
<line x1="304" y1="605.5" x2="307" y2="605.5"/>
<line x1="304" y1="601.5" x2="307" y2="601.5"/>
<line x1="304" y1="598.5" x2="307" y2="598.5"/>
<line x1="304" y1="594.5" x2="307" y2="594.5"/>
<line x1="298" y1="590.5" x2="307" y2="590.5"/>
<line x1="304" y1="587.5" x2="307" y2="587.5"/>
<line x1="304" y1="583.5" x2="307" y2="583.5"/>
<line x1="304" y1="579.5" x2="307" y2="579.5"/>
<line x1="304" y1="576.5" x2="307" y2="576.5"/>
<line x1="301" y1="572.5" x2="307" y2="572.5"/>
<line x1="304" y1="568.5" x2="307" y2="568.5"/>
<line x1="304" y1="565.5" x2="307" y2="565.5"/>
<line x1="304" y1="561.5" x2="307" y2="561.5"/>
<line x1="304" y1="557.5" x2="307" y2="557.5"/>
<line x1="298" y1="553.5" x2="307" y2="553.5"/>
<line x1="304" y1="550.5" x2="307" y2="550.5"/>
<line x1="304" y1="546.5" x2="307" y2="546.5"/>
<line x1="304" y1="542.5" x2="307" y2="542.5"/>
<line x1="304" y1="539.5" x2="307" y2="539.5"/>
<line x1="301" y1="535.5" x2="307" y2="535.5"/>
<line x1="304" y1="531.5" x2="307" y2="531.5"/>
<line x1="304" y1="528.5" x2="307" y2="528.5"/>
<line x1="304" y1="524.5" x2="307" y2="524.5"/>
<line x1="304" y1="520.5" x2="307" y2="520.5"/>
<line x1="298" y1="517.5" x2="307" y2="517.5"/>
<line x1="304" y1="513.5" x2="307" y2="513.5"/>
<line x1="304" y1="509.5" x2="307" y2="509.5"/>
<line x1="304" y1="506.5" x2="307" y2="506.5"/>
<line x1="304" y1="502.5" x2="307" y2="502.5"/>
<line x1="301" y1="498.5" x2="307" y2="498.5"/>
<line x1="304" y1="495.5" x2="307" y2="495.5"/>
<line x1="304" y1="491.5" x2="307" y2="491.5"/>
<line x1="304" y1="487.5" x2="307" y2="487.5"/>
<line x1="304" y1="483.5" x2="307" y2="483.5"/>
<line x1="298" y1="480.5" x2="307" y2="480.5"/>
<line x1="304" y1="476.5" x2="307" y2="476.5"/>
<line x1="304" y1="472.5" x2="307" y2="472.5"/>
<line x1="304" y1="469.5" x2="307" y2="469.5"/>
<line x1="304" y1="465.5" x2="307" y2="465.5"/>
<line x1="301" y1="461.5" x2="307" y2="461.5"/>
<line x1="304" y1="458.5" x2="307" y2="458.5"/>
<line x1="304" y1="454.5" x2="307" y2="454.5"/>
<line x1="304" y1="450.5" x2="307" y2="450.5"/>
<line x1="304" y1="447.5" x2="307" y2="447.5"/>
<line x1="298" y1="443.5" x2="307" y2="443.5"/>
<line x1="304" y1="439.5" x2="307" y2="439.5"/>
<line x1="304" y1="436.5" x2="307" y2="436.5"/>
<line x1="304" y1="432.5" x2="307" y2="432.5"/>
<line x1="304" y1="428.5" x2="307" y2="428.5"/>
<line x1="301" y1="425.5" x2="307" y2="425.5"/>
<line x1="304" y1="421.5" x2="307" y2="421.5"/>
<line x1="304" y1="417.5" x2="307" y2="417.5"/>
<line x1="304" y1="413.5" x2="307" y2="413.5"/>
<line x1="304" y1="410.5" x2="307" y2="410.5"/>
<line x1="298" y1="406.5" x2="307" y2="406.5"/>
<line x1="304" y1="402.5" x2="307" y2="402.5"/>
<line x1="304" y1="399.5" x2="307" y2="399.5"/>
<line x1="304" y1="395.5" x2="307" y2="395.5"/>
<line x1="304" y1="391.5" x2="307" y2="391.5"/>
<line x1="301" y1="388.5" x2="307" y2="388.5"/>
<line x1="304" y1="384.5" x2="307" y2="384.5"/>
<line x1="304" y1="380.5" x2="307" y2="380.5"/>
<line x1="304" y1="377.5" x2="307" y2="377.5"/>
<line x1="304" y1="373.5" x2="307" y2="373.5"/>
<line x1="298" y1="369.5" x2="307" y2="369.5"/>
<line x1="304" y1="366.5" x2="307" y2="366.5"/>
<line x1="304" y1="362.5" x2="307" y2="362.5"/>
<line x1="304" y1="358.5" x2="307" y2="358.5"/>
<line x1="304" y1="355.5" x2="307" y2="355.5"/>
<line x1="301" y1="351.5" x2="307" y2="351.5"/>
<line x1="304" y1="347.5" x2="307" y2="347.5"/>
<line x1="304" y1="343.5" x2="307" y2="343.5"/>
<line x1="304" y1="340.5" x2="307" y2="340.5"/>
<line x1="304" y1="336.5" x2="307" y2="336.5"/>
<line x1="298" y1="332.5" x2="307" y2="332.5"/>
<line x1="304" y1="329.5" x2="307" y2="329.5"/>
<line x1="304" y1="325.5" x2="307" y2="325.5"/>
<line x1="304" y1="321.5" x2="307" y2="321.5"/>
<line x1="304" y1="318.5" x2="307" y2="318.5"/>
<line x1="301" y1="314.5" x2="307" y2="314.5"/>
<line x1="304" y1="310.5" x2="307" y2="310.5"/>
<line x1="304" y1="307.5" x2="307" y2="307.5"/>
<line x1="304" y1="303.5" x2="307" y2="303.5"/>
<line x1="304" y1="299.5" x2="307" y2="299.5"/>
<line x1="298" y1="296.5" x2="307" y2="296.5"/>
<line x1="304" y1="292.5" x2="307" y2="292.5"/>
<line x1="304" y1="288.5" x2="307" y2="288.5"/>
<line x1="304" y1="285.5" x2="307" y2="285.5"/>
<line x1="304" y1="281.5" x2="307" y2="281.5"/>
<line x1="301" y1="277.5" x2="307" y2="277.5"/>
<line x1="304" y1="273.5" x2="307" y2="273.5"/>
<line x1="304" y1="270.5" x2="307" y2="270.5"/>
<line x1="304" y1="266.5" x2="307" y2="266.5"/>
<line x1="304" y1="262.5" x2="307" y2="262.5"/>
<line x1="298" y1="259.5" x2="307" y2="259.5"/>
<line x1="304" y1="255.5" x2="307" y2="255.5"/>
<line x1="304" y1="251.5" x2="307" y2="251.5"/>
<line x1="304" y1="248.5" x2="307" y2="248.5"/>
<line x1="304" y1="244.5" x2="307" y2="244.5"/>
<line x1="301" y1="240.5" x2="307" y2="240.5"/>
<line x1="304" y1="237.5" x2="307" y2="237.5"/>
<line x1="304" y1="233.5" x2="307" y2="233.5"/>
<line x1="304" y1="229.5" x2="307" y2="229.5"/>
<line x1="304" y1="226.5" x2="307" y2="226.5"/>
<line x1="298" y1="222.5" x2="307" y2="222.5"/>
<line x1="304" y1="218.5" x2="307" y2="218.5"/>
<line x1="304" y1="215.5" x2="307" y2="215.5"/>
<line x1="304" y1="211.5" x2="307" y2="211.5"/>
<line x1="304" y1="207.5" x2="307" y2="207.5"/>
<line x1="301" y1="204.5" x2="307" y2="204.5"/>
<line x1="304" y1="200.5" x2="307" y2="200.5"/>
<line x1="304" y1="196.5" x2="307" y2="196.5"/>
<line x1="304" y1="192.5" x2="307" y2="192.5"/>
<line x1="304" y1="189.5" x2="307" y2="189.5"/>
<line x1="298" y1="185.5" x2="307" y2="185.5"/>
<line x1="304" y1="181.5" x2="307" y2="181.5"/>
<line x1="304" y1="178.5" x2="307" y2="178.5"/>
<line x1="304" y1="174.5" x2="307" y2="174.5"/>
<line x1="304" y1="170.5" x2="307" y2="170.5"/>
<line x1="301" y1="167.5" x2="307" y2="167.5"/>
<line x1="304" y1="163.5" x2="307" y2="163.5"/>
<line x1="304" y1="159.5" x2="307" y2="159.5"/>
<line x1="304" y1="156.5" x2="307" y2="156.5"/>
<line x1="304" y1="152.5" x2="307" y2="152.5"/>
<line x1="298" y1="148.5" x2="307" y2="148.5"/>
<line x1="304" y1="145.5" x2="307" y2="145.5"/>
<line x1="304" y1="141.5" x2="307" y2="141.5"/>
<line x1="304" y1="137.5" x2="307" y2="137.5"/>
<line x1="304" y1="134.5" x2="307" y2="134.5"/>
<line x1="301" y1="130.5" x2="307" y2="130.5"/>
<line x1="304" y1="126.5" x2="307" y2="126.5"/>
<line x1="304" y1="122.5" x2="307" y2="122.5"/>
<line x1="304" y1="119.5" x2="307" y2="119.5"/>
<line x1="304" y1="115.5" x2="307" y2="115.5"/>
<line x1="298" y1="111.5" x2="307" y2="111.5"/>
<line x1="304" y1="108.5" x2="307" y2="108.5"/>
<line x1="304" y1="104.5" x2="307" y2="104.5"/>
<line x1="304" y1="100.5" x2="307" y2="100.5"/>
<line x1="304" y1="97.5" x2="307" y2="97.5"/>
<line x1="301" y1="93.5" x2="307" y2="93.5"/>
<line x1="304" y1="89.5" x2="307" y2="89.5"/>
<line x1="304" y1="86.5" x2="307" y2="86.5"/>
<line x1="304" y1="82.5" x2="307" y2="82.5"/>
<line x1="304" y1="78.5" x2="307" y2="78.5"/>
<line x1="298" y1="75.5" x2="307" y2="75.5"/>
<line x1="304" y1="71.5" x2="307" y2="71.5"/>
</g>
<g stroke="#fff" stroke-width="1" stroke-dasharray="3 3" shape-rendering="crispEdges">
<line x1="345" y1="121.5" x2="992" y2="121.5"/>
<line x1="839.5" y1="69" x2="839.5" y2="717"/>
</g>
<rect x="980" y="380" width="44" height="323" fill="#EEEBE1"/>
<g stroke="#000" stroke-width="1" shape-rendering="crispEdges" fill="none">
<line x1="979.5" y1="379" x2="979.5" y2="704"/>
<line x1="979" y1="379.5" x2="996" y2="379.5"/>
<line x1="979" y1="703.5" x2="1022" y2="703.5"/>
<line x1="992.5" y1="380" x2="992.5" y2="703"/>
<line x1="990" y1="702.5" x2="993" y2="702.5"/>
<line x1="990" y1="700.5" x2="993" y2="700.5"/>
<line x1="990" y1="698.5" x2="993" y2="698.5"/>
<line x1="990" y1="696.5" x2="993" y2="696.5"/>
<line x1="987" y1="694.5" x2="993" y2="694.5"/>
<line x1="990" y1="692.5" x2="993" y2="692.5"/>
<line x1="990" y1="690.5" x2="993" y2="690.5"/>
<line x1="990" y1="688.5" x2="993" y2="688.5"/>
<line x1="990" y1="686.5" x2="993" y2="686.5"/>
<line x1="984" y1="684.5" x2="993" y2="684.5"/>
<line x1="990" y1="682.5" x2="993" y2="682.5"/>
<line x1="990" y1="680.5" x2="993" y2="680.5"/>
<line x1="990" y1="678.5" x2="993" y2="678.5"/>
<line x1="990" y1="676.5" x2="993" y2="676.5"/>
<line x1="987" y1="674.5" x2="993" y2="674.5"/>
<line x1="990" y1="672.5" x2="993" y2="672.5"/>
<line x1="990" y1="670.5" x2="993" y2="670.5"/>
<line x1="990" y1="668.5" x2="993" y2="668.5"/>
<line x1="990" y1="666.5" x2="993" y2="666.5"/>
<line x1="984" y1="664.5" x2="993" y2="664.5"/>
<line x1="990" y1="662.5" x2="993" y2="662.5"/>
<line x1="990" y1="660.5" x2="993" y2="660.5"/>
<line x1="990" y1="658.5" x2="993" y2="658.5"/>
<line x1="990" y1="656.5" x2="993" y2="656.5"/>
<line x1="987" y1="654.5" x2="993" y2="654.5"/>
<line x1="990" y1="652.5" x2="993" y2="652.5"/>
<line x1="990" y1="650.5" x2="993" y2="650.5"/>
<line x1="990" y1="648.5" x2="993" y2="648.5"/>
<line x1="990" y1="646.5" x2="993" y2="646.5"/>
<line x1="984" y1="644.5" x2="993" y2="644.5"/>
<line x1="990" y1="642.5" x2="993" y2="642.5"/>
<line x1="990" y1="640.5" x2="993" y2="640.5"/>
<line x1="990" y1="638.5" x2="993" y2="638.5"/>
<line x1="990" y1="636.5" x2="993" y2="636.5"/>
<line x1="987" y1="634.5" x2="993" y2="634.5"/>
<line x1="990" y1="632.5" x2="993" y2="632.5"/>
<line x1="990" y1="630.5" x2="993" y2="630.5"/>
<line x1="990" y1="628.5" x2="993" y2="628.5"/>
<line x1="990" y1="626.5" x2="993" y2="626.5"/>
<line x1="984" y1="624.5" x2="993" y2="624.5"/>
<line x1="990" y1="622.5" x2="993" y2="622.5"/>
<line x1="990" y1="620.5" x2="993" y2="620.5"/>
<line x1="990" y1="618.5" x2="993" y2="618.5"/>
<line x1="990" y1="616.5" x2="993" y2="616.5"/>
<line x1="987" y1="614.5" x2="993" y2="614.5"/>
<line x1="990" y1="612.5" x2="993" y2="612.5"/>
<line x1="990" y1="610.5" x2="993" y2="610.5"/>
<line x1="990" y1="608.5" x2="993" y2="608.5"/>
<line x1="990" y1="606.5" x2="993" y2="606.5"/>
<line x1="984" y1="604.5" x2="993" y2="604.5"/>
<line x1="990" y1="602.5" x2="993" y2="602.5"/>
<line x1="990" y1="600.5" x2="993" y2="600.5"/>
<line x1="990" y1="598.5" x2="993" y2="598.5"/>
<line x1="990" y1="596.5" x2="993" y2="596.5"/>
<line x1="987" y1="594.5" x2="993" y2="594.5"/>
<line x1="990" y1="592.5" x2="993" y2="592.5"/>
<line x1="990" y1="590.5" x2="993" y2="590.5"/>
<line x1="990" y1="588.5" x2="993" y2="588.5"/>
<line x1="990" y1="586.5" x2="993" y2="586.5"/>
<line x1="984" y1="584.5" x2="993" y2="584.5"/>
<line x1="990" y1="582.5" x2="993" y2="582.5"/>
<line x1="990" y1="580.5" x2="993" y2="580.5"/>
<line x1="990" y1="578.5" x2="993" y2="578.5"/>
<line x1="990" y1="576.5" x2="993" y2="576.5"/>
<line x1="987" y1="574.5" x2="993" y2="574.5"/>
<line x1="990" y1="572.5" x2="993" y2="572.5"/>
<line x1="990" y1="570.5" x2="993" y2="570.5"/>
<line x1="990" y1="568.5" x2="993" y2="568.5"/>
<line x1="990" y1="566.5" x2="993" y2="566.5"/>
<line x1="984" y1="564.5" x2="993" y2="564.5"/>
<line x1="990" y1="562.5" x2="993" y2="562.5"/>
<line x1="990" y1="560.5" x2="993" y2="560.5"/>
<line x1="990" y1="558.5" x2="993" y2="558.5"/>
<line x1="990" y1="556.5" x2="993" y2="556.5"/>
<line x1="987" y1="554.5" x2="993" y2="554.5"/>
<line x1="990" y1="552.5" x2="993" y2="552.5"/>
<line x1="990" y1="550.5" x2="993" y2="550.5"/>
<line x1="990" y1="548.5" x2="993" y2="548.5"/>
<line x1="990" y1="546.5" x2="993" y2="546.5"/>
<line x1="984" y1="544.5" x2="993" y2="544.5"/>
<line x1="990" y1="542.5" x2="993" y2="542.5"/>
<line x1="990" y1="540.5" x2="993" y2="540.5"/>
<line x1="990" y1="538.5" x2="993" y2="538.5"/>
<line x1="990" y1="536.5" x2="993" y2="536.5"/>
<line x1="987" y1="534.5" x2="993" y2="534.5"/>
<line x1="990" y1="532.5" x2="993" y2="532.5"/>
<line x1="990" y1="530.5" x2="993" y2="530.5"/>
<line x1="990" y1="528.5" x2="993" y2="528.5"/>
<line x1="990" y1="526.5" x2="993" y2="526.5"/>
<line x1="984" y1="524.5" x2="993" y2="524.5"/>
<line x1="990" y1="522.5" x2="993" y2="522.5"/>
<line x1="990" y1="520.5" x2="993" y2="520.5"/>
<line x1="990" y1="518.5" x2="993" y2="518.5"/>
<line x1="990" y1="516.5" x2="993" y2="516.5"/>
<line x1="987" y1="514.5" x2="993" y2="514.5"/>
<line x1="990" y1="512.5" x2="993" y2="512.5"/>
<line x1="990" y1="510.5" x2="993" y2="510.5"/>
<line x1="990" y1="508.5" x2="993" y2="508.5"/>
<line x1="990" y1="506.5" x2="993" y2="506.5"/>
<line x1="984" y1="504.5" x2="993" y2="504.5"/>
<line x1="990" y1="502.5" x2="993" y2="502.5"/>
<line x1="990" y1="500.5" x2="993" y2="500.5"/>
<line x1="990" y1="498.5" x2="993" y2="498.5"/>
<line x1="990" y1="496.5" x2="993" y2="496.5"/>
<line x1="987" y1="494.5" x2="993" y2="494.5"/>
<line x1="990" y1="492.5" x2="993" y2="492.5"/>
<line x1="990" y1="490.5" x2="993" y2="490.5"/>
<line x1="990" y1="488.5" x2="993" y2="488.5"/>
<line x1="990" y1="486.5" x2="993" y2="486.5"/>
<line x1="984" y1="484.5" x2="993" y2="484.5"/>
<line x1="990" y1="482.5" x2="993" y2="482.5"/>
<line x1="990" y1="480.5" x2="993" y2="480.5"/>
<line x1="990" y1="478.5" x2="993" y2="478.5"/>
<line x1="990" y1="476.5" x2="993" y2="476.5"/>
<line x1="987" y1="474.5" x2="993" y2="474.5"/>
<line x1="990" y1="472.5" x2="993" y2="472.5"/>
<line x1="990" y1="470.5" x2="993" y2="470.5"/>
<line x1="990" y1="468.5" x2="993" y2="468.5"/>
<line x1="990" y1="466.5" x2="993" y2="466.5"/>
<line x1="984" y1="464.5" x2="993" y2="464.5"/>
<line x1="990" y1="462.5" x2="993" y2="462.5"/>
<line x1="990" y1="460.5" x2="993" y2="460.5"/>
<line x1="990" y1="458.5" x2="993" y2="458.5"/>
<line x1="990" y1="456.5" x2="993" y2="456.5"/>
<line x1="987" y1="454.5" x2="993" y2="454.5"/>
<line x1="990" y1="452.5" x2="993" y2="452.5"/>
<line x1="990" y1="450.5" x2="993" y2="450.5"/>
<line x1="990" y1="448.5" x2="993" y2="448.5"/>
<line x1="990" y1="446.5" x2="993" y2="446.5"/>
<line x1="984" y1="444.5" x2="993" y2="444.5"/>
<line x1="990" y1="442.5" x2="993" y2="442.5"/>
<line x1="990" y1="440.5" x2="993" y2="440.5"/>
<line x1="990" y1="438.5" x2="993" y2="438.5"/>
<line x1="990" y1="436.5" x2="993" y2="436.5"/>
<line x1="987" y1="434.5" x2="993" y2="434.5"/>
<line x1="990" y1="432.5" x2="993" y2="432.5"/>
<line x1="990" y1="430.5" x2="993" y2="430.5"/>
<line x1="990" y1="428.5" x2="993" y2="428.5"/>
<line x1="990" y1="426.5" x2="993" y2="426.5"/>
<line x1="984" y1="424.5" x2="993" y2="424.5"/>
<line x1="990" y1="422.5" x2="993" y2="422.5"/>
<line x1="990" y1="420.5" x2="993" y2="420.5"/>
<line x1="990" y1="418.5" x2="993" y2="418.5"/>
<line x1="990" y1="415.5" x2="993" y2="415.5"/>
<line x1="987" y1="413.5" x2="993" y2="413.5"/>
<line x1="990" y1="411.5" x2="993" y2="411.5"/>
<line x1="990" y1="409.5" x2="993" y2="409.5"/>
<line x1="990" y1="407.5" x2="993" y2="407.5"/>
<line x1="990" y1="405.5" x2="993" y2="405.5"/>
<line x1="984" y1="403.5" x2="993" y2="403.5"/>
<line x1="990" y1="401.5" x2="993" y2="401.5"/>
<line x1="990" y1="399.5" x2="993" y2="399.5"/>
<line x1="990" y1="397.5" x2="993" y2="397.5"/>
<line x1="990" y1="395.5" x2="993" y2="395.5"/>
<line x1="987" y1="393.5" x2="993" y2="393.5"/>
<line x1="990" y1="391.5" x2="993" y2="391.5"/>
<line x1="990" y1="389.5" x2="993" y2="389.5"/>
<line x1="990" y1="387.5" x2="993" y2="387.5"/>
<line x1="990" y1="385.5" x2="993" y2="385.5"/>
</g>
<g font-family="Liberation Sans, Arial, sans-serif" font-size="11px" fill="#000">
<text x="382.8" y="59.5" text-anchor="middle">4000</text>
<text x="382.8" y="735" text-anchor="middle">4000</text>
<text x="433.6" y="59.5" text-anchor="middle">[U/min]</text>
<text x="433.6" y="735" text-anchor="middle">[U/min]</text>
<text x="484.4" y="59.5" text-anchor="middle">6000</text>
<text x="484.4" y="735" text-anchor="middle">6000</text>
<text x="535.2" y="59.5" text-anchor="middle">7000</text>
<text x="535.2" y="735" text-anchor="middle">7000</text>
<text x="586.0" y="59.5" text-anchor="middle">8000</text>
<text x="586.0" y="735" text-anchor="middle">8000</text>
<text x="636.8" y="59.5" text-anchor="middle">9000</text>
<text x="636.8" y="735" text-anchor="middle">9000</text>
<text x="687.6" y="59.5" text-anchor="middle">10000</text>
<text x="687.6" y="735" text-anchor="middle">10000</text>
<text x="738.4" y="59.5" text-anchor="middle">11000</text>
<text x="738.4" y="735" text-anchor="middle">11000</text>
<text x="789.2" y="59.5" text-anchor="middle">12000</text>
<text x="789.2" y="735" text-anchor="middle">12000</text>
<text x="890.7" y="59.5" text-anchor="middle">14000</text>
<text x="890.7" y="735" text-anchor="middle">14000</text>
<text x="941.5" y="59.5" text-anchor="middle">15000</text>
<text x="941.5" y="735" text-anchor="middle">15000</text>
<text x="992.3" y="59.5" text-anchor="middle">16000</text>
<text x="992.3" y="735" text-anchor="middle">16000</text>
<text x="839.5" y="61" text-anchor="middle">12989</text>
<text x="839.5" y="736" text-anchor="middle">12989</text>
<text x="338" y="721.7" text-anchor="end">-20</text>
<text x="338" y="694.6" text-anchor="end">-10</text>
<text x="338" y="667.5" text-anchor="end">0</text>
<text x="338" y="640.4" text-anchor="end">10</text>
<text x="338" y="613.3" text-anchor="end">20</text>
<text x="338" y="586.2" text-anchor="end">30</text>
<text x="338" y="559.1" text-anchor="end">40</text>
<text x="338" y="532.0" text-anchor="end">50</text>
<text x="338" y="505.0" text-anchor="end">60</text>
<text x="338" y="477.9" text-anchor="end">70</text>
<text x="338" y="450.8" text-anchor="end">80</text>
<text x="338" y="423.7" text-anchor="end">90</text>
<text x="338" y="396.6" text-anchor="end">100</text>
<text x="338" y="369.5" text-anchor="end">110</text>
<text x="338" y="342.4" text-anchor="end">120</text>
<text x="997" y="342.4">120</text>
<text x="338" y="315.3" text-anchor="end">130</text>
<text x="997" y="315.3">130</text>
<text x="338" y="288.2" text-anchor="end">140</text>
<text x="997" y="288.2">140</text>
<text x="338" y="261.1" text-anchor="end">150</text>
<text x="997" y="261.1">150</text>
<text x="338" y="234.1" text-anchor="end">160</text>
<text x="997" y="234.1">160</text>
<text x="338" y="207.0" text-anchor="end">170</text>
<text x="997" y="207.0">170</text>
<text x="338" y="179.9" text-anchor="end">180</text>
<text x="997" y="179.9">180</text>
<text x="338" y="152.8" text-anchor="end">190</text>
<text x="997" y="152.8">190</text>
<text x="338" y="98.6" text-anchor="end">210</text>
<text x="997" y="98.6">210</text>
<rect x="312" y="115" width="30" height="13" fill="#EEEBE1"/>
<rect x="275" y="115" width="33" height="13" fill="#EEEBE1"/>
<rect x="995" y="115" width="29" height="13" fill="#EEEBE1"/>
<text x="341" y="125.5" text-anchor="end">200,6</text>
<text x="997.5" y="125">200,6</text>
<text x="338.5" y="72" text-anchor="end">[PS]</text>
<text x="997" y="72">[PS]</text>
<text x="294" y="704.4" text-anchor="end">-10</text>
<text x="294" y="667.6" text-anchor="end">0</text>
<text x="294" y="630.8" text-anchor="end">10</text>
<text x="294" y="593.9" text-anchor="end">20</text>
<text x="294" y="557.1" text-anchor="end">30</text>
<text x="294" y="520.2" text-anchor="end">40</text>
<text x="294" y="483.4" text-anchor="end">50</text>
<text x="294" y="446.6" text-anchor="end">60</text>
<text x="294" y="409.7" text-anchor="end">70</text>
<text x="294" y="372.9" text-anchor="end">80</text>
<text x="294" y="336.0" text-anchor="end">90</text>
<text x="294" y="299.2" text-anchor="end">100</text>
<text x="294" y="262.4" text-anchor="end">110</text>
<text x="294" y="225.5" text-anchor="end">120</text>
<text x="294" y="188.7" text-anchor="end">130</text>
<text x="294" y="151.8" text-anchor="end">140</text>
<text x="294" y="115.0" text-anchor="end">150</text>
<text x="304" y="125.5" text-anchor="end">147,5</text>
<text x="294" y="72" text-anchor="end">[KW]</text>
<text x="997" y="688.0">-10</text>
<text x="997" y="667.9">0</text>
<text x="997" y="647.8">10</text>
<text x="997" y="627.8">20</text>
<text x="997" y="607.7">30</text>
<text x="997" y="587.6">40</text>
<text x="997" y="567.6">50</text>
<text x="997" y="547.5">60</text>
<text x="997" y="527.4">70</text>
<text x="997" y="507.4">80</text>
<text x="997" y="487.3">90</text>
<text x="997" y="467.2">100</text>
<text x="997" y="447.2">110</text>
<text x="997" y="427.1">120</text>
<text x="997" y="407.1">130</text>
<text x="999" y="382.7">[Nm]</text>
<text x="444" y="90">P/Mgem / [U/min]</text>
<text x="444" y="108">nach EG- Norm</text>
</g>
<g>
<rect x="363" y="77" width="72" height="72" fill="#fff" stroke="#e00000" stroke-width="2"/>
<line x1="364" y1="121.5" x2="434" y2="121.5" stroke="#999" stroke-width="1" stroke-dasharray="3 3" shape-rendering="crispEdges"/>
<text font-family="Liberation Serif, Times New Roman, serif" font-size="57px" fill="#d40000"><tspan x="368.5" y="126.5">p</tspan><tspan x="399.5" y="125.2">4</tspan></text>
<text x="370.5" y="91" font-family="Liberation Serif, serif" font-size="7.3px" fill="#000" stroke="#000" stroke-width="0.2">Amerschläger</text>
<text x="385.5" y="139" font-family="Liberation Serif, serif" font-size="7.2px" fill="#000" stroke="#000" stroke-width="0.25">copyright *bdp</text>
</g>
</svg>

<!-- taskbar -->
<div id="taskbar">
  <div id="start">
    <svg class="abs" style="left:11px;top:5.500px" width="20" height="20" viewBox="0 0 19 19"><path d="M2.5 3.5q3.5-2 6.5 0l-1.3 5.5q-3-2-6.5 0z" fill="#e8542a"/><path d="M10.3 4q3 1.8 6.7 0l-1.4 5.5q-3.5 1.8-6.6 0z" fill="#7cc242"/><path d="M1 10.3q3.5-2 6.5 0l-1.3 5.7q-3-2-6.6 0z" fill="#4a8ee8"/><path d="M8.7 10.9q3 1.8 6.6 0l-1.4 5.6q-3.4 1.8-6.6 0z" fill="#f4c22a"/></svg>
    <div id="starttxt">Start</div>
  </div>
  <svg class="abs" style="left:108px;top:5px" width="20" height="20" viewBox="1 1 16 16"><rect x="3" y="3" width="12" height="11" rx="2" fill="#fff" stroke="#5a84d0" stroke-width="1.5"/><rect x="6" y="6" width="6" height="5" fill="#3a5aa0"/><circle cx="14" cy="5" r="2" fill="#e0a030"/></svg>
  <svg class="abs" style="left:133px;top:5px" width="20" height="20" viewBox="0 0 20 20"><text x="3" y="16" font-family="Liberation Sans,sans-serif" font-size="18px" font-weight="bold" font-style="italic" fill="#4aa8f0">e</text><ellipse cx="10" cy="10" rx="9.5" ry="3.6" fill="none" stroke="#f0c040" stroke-width="1.6" transform="rotate(-35 10 10)"/></svg>
  <div id="task">
    <svg class="abs" style="left:10.500px;top:4.500px" width="16" height="16" viewBox="0 0 16 16"><rect x="0.5" y="0.5" width="15" height="15" fill="#fff" stroke="#e89a9a"/><text x="1.2" y="11" font-family="Liberation Serif,serif" font-size="13px" fill="#d22" letter-spacing="-0.8">p4</text></svg>
    <div class="t" style="left:30px;top:6.500px;color:#fff">P4</div>
  </div>
  <div id="tray">
    <svg class="abs" style="left:10px;top:6px" width="92" height="18" viewBox="0 0 92 18">
      <!-- network with red x -->
      <rect x="5" y="1" width="8" height="7" fill="#23306a" stroke="#9ab" stroke-width="0.8"/><rect x="1" y="5" width="8" height="7" fill="#2a3c8a" stroke="#9ab" stroke-width="0.8"/><path d="M4 9l11 8M15 9l-11 8" stroke="#e8202a" stroke-width="2.4"/>
      <!-- speaker with no sign -->
      <circle cx="24" cy="7" r="4.5" fill="#777" stroke="#ccc" stroke-width="1"/><circle cx="24" cy="7" r="1.8" fill="#222"/><circle cx="29" cy="12" r="4" fill="#e8402a" stroke="#fff" stroke-width="0.8"/><path d="M26.5 10l5 4" stroke="#fff" stroke-width="1.4"/>
      <!-- monitor -->
      <rect x="37" y="1" width="14" height="10" fill="#fff" stroke="#222" stroke-width="1"/><rect x="38.5" y="2.5" width="3.7" height="3.5" fill="#e02a8a"/><rect x="42.2" y="2.5" width="3.7" height="3.5" fill="#3ac03a"/><rect x="45.9" y="2.5" width="3.7" height="3.5" fill="#2a6ae0"/><rect x="38.5" y="6" width="5.5" height="3.5" fill="#e8d020"/><rect x="44" y="6" width="5.6" height="3.5" fill="#e03020"/><rect x="41" y="11" width="7" height="3" fill="#ddd" stroke="#222" stroke-width="0.6"/><rect x="38" y="14" width="14" height="3" fill="#eee" stroke="#222" stroke-width="0.8"/>
      <!-- shield -->
      <path d="M62 1.5l5.5 2q0 9-5.5 13q-5.500-4-5.500-13z" fill="#d8202a" stroke="#f8a0a0" stroke-width="0.8"/><path d="M59.800 6.500l4.400 4.400M64.200 6.500l-4.400 4.400" stroke="#fff" stroke-width="1.5"/>
      <!-- wifi -->
      <rect x="73" y="1" width="16" height="16" fill="#10106a"/><circle cx="81" cy="9" r="1.800" fill="#f8e020"/><path d="M78 5.500q-2.400 3.500 0 7M84 5.500q2.400 3.500 0 7M76 3.500q-3.800 5.500 0 11M86 3.500q3.800 5.500 0 11" fill="none" stroke="#f8e020" stroke-width="1"/>
    </svg>
    <div class="t" style="left:106px;top:8px;color:#fff">16:17</div>
  </div>
</div>
</div>
</body>
</html>
